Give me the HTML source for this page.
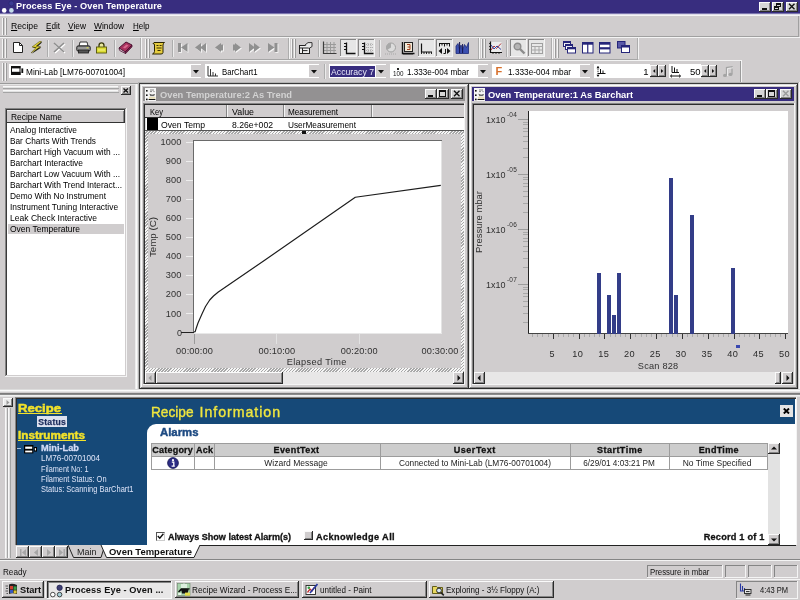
<!DOCTYPE html>
<html><head><meta charset="utf-8"><title>Process Eye - Oven Temperature</title>
<style>
html,body{margin:0;padding:0;}
body{width:800px;height:600px;overflow:hidden;background:#d0cdce;position:relative;font-family:"Liberation Sans",sans-serif;font-size:11px;}
#r{position:absolute;left:0;top:0;width:800px;height:600px;overflow:hidden;will-change:transform;}
#r div,#r svg,#r span{position:absolute;}
#r div{box-sizing:border-box;}
#r span{white-space:nowrap;line-height:1;}
svg text{font-family:"Liberation Sans",sans-serif;}
</style></head><body><div id="r">
<div style="left:0px;top:0px;width:800px;height:13px;background:#382d7f;"></div>
<div style="left:0px;top:13px;width:800px;height:1px;background:#7a74ae;"></div>
<div style="left:0px;top:14px;width:800px;height:1px;background:#dddbe8;"></div>
<svg style="left:1px;top:0px" width="14" height="14" viewBox="0 0 14 14" ><circle cx="10.4" cy="3.4" r="2.5" fill="#3c3c92" stroke="#26266e" stroke-width="0.6"/><circle cx="3.2" cy="10.4" r="2.3" fill="#ffffff"/><circle cx="10.4" cy="10.4" r="2.3" fill="#c4dcea"/></svg>
<span id="t0" style="top:2.2px;font-size:9.2px;color:#ffffff;font-weight:bold;letter-spacing:0.09px;left:16.0px;">Process Eye - Oven Temperature</span>
<div style="left:759px;top:2px;width:12px;height:10px;background:#d6d6d6;"></div>
<div style="left:759px;top:2px;width:11px;height:1px;background:#fafafa;"></div>
<div style="left:759px;top:2px;width:1px;height:9px;background:#fafafa;"></div>
<div style="left:759px;top:11px;width:12px;height:1px;background:#2a2a2a;"></div>
<div style="left:770px;top:2px;width:1px;height:10px;background:#2a2a2a;"></div>
<div style="left:760px;top:10px;width:10px;height:1px;background:#858585;"></div>
<div style="left:769px;top:3px;width:1px;height:8px;background:#858585;"></div>
<div style="left:762px;top:8px;width:5px;height:2px;background:#111;"></div>
<div style="left:772px;top:2px;width:12px;height:10px;background:#d6d6d6;"></div>
<div style="left:772px;top:2px;width:11px;height:1px;background:#fafafa;"></div>
<div style="left:772px;top:2px;width:1px;height:9px;background:#fafafa;"></div>
<div style="left:772px;top:11px;width:12px;height:1px;background:#2a2a2a;"></div>
<div style="left:783px;top:2px;width:1px;height:10px;background:#2a2a2a;"></div>
<div style="left:773px;top:10px;width:10px;height:1px;background:#858585;"></div>
<div style="left:782px;top:3px;width:1px;height:8px;background:#858585;"></div>
<div style="left:776px;top:3px;width:5px;height:4px;border:1px solid #111;border-top:2px solid #111;"></div>
<div style="left:774px;top:6px;width:5px;height:4px;background:#d6d6d6;border:1px solid #111;border-top:2px solid #111;"></div>
<div style="left:786px;top:2px;width:12px;height:10px;background:#d6d6d6;"></div>
<div style="left:786px;top:2px;width:11px;height:1px;background:#fafafa;"></div>
<div style="left:786px;top:2px;width:1px;height:9px;background:#fafafa;"></div>
<div style="left:786px;top:11px;width:12px;height:1px;background:#2a2a2a;"></div>
<div style="left:797px;top:2px;width:1px;height:10px;background:#2a2a2a;"></div>
<div style="left:787px;top:10px;width:10px;height:1px;background:#858585;"></div>
<div style="left:796px;top:3px;width:1px;height:8px;background:#858585;"></div>
<svg style="left:788px;top:3px" width="8" height="7" viewBox="0 0 8 7" ><path d="M1,0.8 L6.5,6.2 M6.5,0.8 L1,6.2" stroke="#111" stroke-width="1.35" fill="none"/></svg>
<div style="left:0px;top:15px;width:800px;height:1px;background:#f4f4f4;"></div>
<div style="left:0px;top:36px;width:799px;height:1px;background:#a0a0a0;"></div>
<div style="left:798px;top:16px;width:1px;height:21px;background:#a0a0a0;"></div>
<div style="left:2px;top:18px;width:1px;height:17px;background:#f4f4f4;"></div>
<div style="left:3px;top:18px;width:1px;height:17px;background:#9a9a9a;"></div>
<div style="left:5px;top:18px;width:1px;height:17px;background:#f4f4f4;"></div>
<div style="left:6px;top:18px;width:1px;height:17px;background:#9a9a9a;"></div>
<span id="t1" style="top:21.4px;font-size:9.5px;color:#000;left:11.0px;transform-origin:0 50%;transform:scaleX(0.912);"><u>R</u>ecipe</span>
<span id="t2" style="top:21.4px;font-size:9.5px;color:#000;left:46.0px;transform-origin:0 50%;transform:scaleX(0.854);"><u>E</u>dit</span>
<span id="t3" style="top:21.4px;font-size:9.5px;color:#000;left:68.0px;transform-origin:0 50%;transform:scaleX(0.881);"><u>V</u>iew</span>
<span id="t4" style="top:21.4px;font-size:9.5px;color:#000;left:94.0px;transform-origin:0 50%;transform:scaleX(0.888);"><u>W</u>indow</span>
<span id="t5" style="top:21.4px;font-size:9.5px;color:#000;left:132.5px;transform-origin:0 50%;transform:scaleX(0.843);"><u>H</u>elp</span>
<div style="left:0px;top:37px;width:800px;height:1px;background:#f4f4f4;"></div>
<div style="left:0px;top:59px;width:638px;height:1px;background:#a6a6a6;"></div>
<div style="left:0px;top:60px;width:742px;height:1px;background:#f4f4f4;"></div>
<div style="left:2px;top:39px;width:1px;height:19px;background:#f4f4f4;"></div>
<div style="left:3px;top:39px;width:1px;height:19px;background:#9a9a9a;"></div>
<div style="left:5px;top:39px;width:1px;height:19px;background:#f4f4f4;"></div>
<div style="left:6px;top:39px;width:1px;height:19px;background:#9a9a9a;"></div>
<svg style="left:13px;top:42px" width="10" height="11" viewBox="0 0 10 11" ><path d="M0.5,0.5 H6.5 L9.5,3.5 V10.5 H0.5 Z" fill="#fff" stroke="#222" stroke-width="1"/><path d="M6.5,0.5 V3.5 H9.5" fill="none" stroke="#222" stroke-width="1"/></svg>
<svg style="left:30px;top:41px" width="12" height="13" viewBox="0 0 12 13" ><path d="M10.3,1.3 L2.8,6.8 L7,7.2 L1.8,12.8 L11.3,6.4 L7,6 L12.3,1.3 Z" fill="#1a1a10"/><path d="M9.5,0.5 L2,6 L6.2,6.4 L1,12 L10.5,5.6 L6.2,5.2 L11.5,0.5 Z" fill="#eadc3a" stroke="#4a4200" stroke-width="0.5"/></svg>
<div style="left:47px;top:40px;width:1px;height:17px;background:#adadad;"></div>
<div style="left:48px;top:40px;width:1px;height:17px;background:#ececec;"></div>
<svg style="left:53px;top:42px" width="13" height="12" viewBox="0 0 13 12" ><path d="M2,2 L12,11 M12,2 L2,11" stroke="#fff" stroke-width="1.6"/><path d="M1,1 L11,10 M11,1 L1,10" stroke="#8e8e8e" stroke-width="1.6"/></svg>
<div style="left:72px;top:40px;width:1px;height:17px;background:#adadad;"></div>
<div style="left:73px;top:40px;width:1px;height:17px;background:#ececec;"></div>
<svg style="left:76px;top:41px" width="15" height="13" viewBox="0 0 15 13" ><path d="M4,1 H11 L12,5 H3 Z" fill="#fff" stroke="#222" stroke-width="0.9"/><rect x="0.8" y="5" width="13.4" height="5" rx="1.2" fill="#9a9a9a" stroke="#1c1c1c" stroke-width="1"/><rect x="2.5" y="9" width="10" height="3" fill="#555" stroke="#1c1c1c" stroke-width="0.8"/><rect x="10.5" y="6.3" width="2" height="1" fill="#e0e040"/></svg>
<svg style="left:95px;top:41px" width="13" height="13" viewBox="0 0 13 13" ><path d="M4,6.5 V4.4 Q4,1.8 6.5,1.8 Q9,1.8 9,4.4 V6.5" fill="#e8e8a0" stroke="#3c3c10" stroke-width="1.3"/><rect x="1.5" y="6" width="10" height="6" fill="#dcdc34" stroke="#55550c" stroke-width="0.9"/><rect x="3" y="8.5" width="7" height="1" fill="#f4f48a"/></svg>
<div style="left:114px;top:40px;width:1px;height:17px;background:#adadad;"></div>
<div style="left:115px;top:40px;width:1px;height:17px;background:#ececec;"></div>
<svg style="left:118px;top:41px" width="15" height="13" viewBox="0 0 15 13" ><path d="M1,7 L8,1 L14,4 L7,11 Z" fill="#a8325e" stroke="#4a1030" stroke-width="1"/><path d="M1,7 L1.6,9.4 L7.6,12.6 L7,11 Z" fill="#e8d8e0" stroke="#4a1030" stroke-width="0.8"/><path d="M7,11 L7.6,12.6 L14,5.8 L14,4 Z" fill="#7a2048" stroke="#4a1030" stroke-width="0.8"/><path d="M5,6.5 L8.5,3.6 L10.5,4.6 L7,7.6 Z" fill="#d86a8e"/></svg>
<div style="left:140px;top:38px;width:1px;height:21px;background:#adadad;"></div>
<div style="left:141px;top:38px;width:1px;height:21px;background:#f4f4f4;"></div>
<div style="left:145px;top:39px;width:1px;height:19px;background:#f4f4f4;"></div>
<div style="left:146px;top:39px;width:1px;height:19px;background:#9a9a9a;"></div>
<div style="left:148px;top:39px;width:1px;height:19px;background:#f4f4f4;"></div>
<div style="left:149px;top:39px;width:1px;height:19px;background:#9a9a9a;"></div>
<svg style="left:151px;top:41px" width="15" height="14" viewBox="0 0 15 14" ><path d="M3,1.5 H13.5 Q12,2.5 12,4 V11.5 Q12,13 10,13 H1.5 Q3.5,12 3.5,10.5 V4 Q3.5,2.5 2,2.5 Z" fill="#e6cc40" stroke="#2a2400" stroke-width="1"/><path d="M5.5,4.5 H7.5 M8.6,4.5 H10.6 M5.5,7 H10.6 M6.5,9.5 H9.6" stroke="#3a3000" stroke-width="1"/></svg>
<div style="left:172px;top:40px;width:1px;height:17px;background:#adadad;"></div>
<div style="left:173px;top:40px;width:1px;height:17px;background:#ececec;"></div>
<svg style="left:178px;top:43px" width="13" height="11" viewBox="0 0 13 11" ><g transform="translate(0.9,0.9)" fill="#f6f6f6"><rect x="0" y="0" width="3" height="9"/><polygon points="9.5,0 9.5,9 3,4.5"/></g><g transform="translate(0,0)" fill="#909090"><rect x="0" y="0" width="3" height="9"/><polygon points="9.5,0 9.5,9 3,4.5"/></g></svg>
<svg style="left:195px;top:43px" width="13" height="11" viewBox="0 0 13 11" ><g transform="translate(0.9,0.9)" fill="#f6f6f6"><polygon points="6,0 6,9 0,4.5"/><polygon points="11,0 11,9 5,4.5"/></g><g transform="translate(0,0)" fill="#909090"><polygon points="6,0 6,9 0,4.5"/><polygon points="11,0 11,9 5,4.5"/></g></svg>
<svg style="left:214.7px;top:43px" width="13" height="11" viewBox="0 0 13 11" ><g transform="translate(0.9,0.9)" fill="#f6f6f6"><polygon points="6,0 6,9 0,4.5"/><rect x="5.5" y="1.5" width="2.5" height="6"/></g><g transform="translate(0,0)" fill="#909090"><polygon points="6,0 6,9 0,4.5"/><rect x="5.5" y="1.5" width="2.5" height="6"/></g></svg>
<svg style="left:232.6px;top:43px" width="13" height="11" viewBox="0 0 13 11" ><g transform="translate(0.9,0.9)" fill="#f6f6f6"><polygon points="2,0 2,9 8,4.5"/><rect x="0" y="1.5" width="2.5" height="6"/></g><g transform="translate(0,0)" fill="#909090"><polygon points="2,0 2,9 8,4.5"/><rect x="0" y="1.5" width="2.5" height="6"/></g></svg>
<svg style="left:249px;top:43px" width="13" height="11" viewBox="0 0 13 11" ><g transform="translate(0.9,0.9)" fill="#f6f6f6"><polygon points="0,0 0,9 6,4.5"/><polygon points="5,0 5,9 11,4.5"/></g><g transform="translate(0,0)" fill="#909090"><polygon points="0,0 0,9 6,4.5"/><polygon points="5,0 5,9 11,4.5"/></g></svg>
<svg style="left:267.5px;top:43px" width="13" height="11" viewBox="0 0 13 11" ><g transform="translate(0.9,0.9)" fill="#f6f6f6"><polygon points="0,0 0,9 6.5,4.5"/><rect x="6.5" y="0" width="3" height="9"/></g><g transform="translate(0,0)" fill="#909090"><polygon points="0,0 0,9 6.5,4.5"/><rect x="6.5" y="0" width="3" height="9"/></g></svg>
<div style="left:288px;top:38px;width:1px;height:21px;background:#adadad;"></div>
<div style="left:289px;top:38px;width:1px;height:21px;background:#f4f4f4;"></div>
<div style="left:291px;top:39px;width:1px;height:19px;background:#f4f4f4;"></div>
<div style="left:292px;top:39px;width:1px;height:19px;background:#9a9a9a;"></div>
<div style="left:294px;top:39px;width:1px;height:19px;background:#f4f4f4;"></div>
<div style="left:295px;top:39px;width:1px;height:19px;background:#9a9a9a;"></div>
<svg style="left:299px;top:42px" width="14" height="12" viewBox="0 0 14 12" ><rect x="0.5" y="3.5" width="10" height="8" fill="#f0f0f0" stroke="#222" stroke-width="1"/><path d="M0.5,6 H10.5 M3.5,6 V11.5 M3.5,8.6 H8.5" stroke="#222" stroke-width="1"/><path d="M6,3 L9,0.6 H13 V4.6 L10.6,6" fill="#e8e8e8" stroke="#222" stroke-width="0.9"/></svg>
<div style="left:318px;top:40px;width:1px;height:17px;background:#adadad;"></div>
<div style="left:319px;top:40px;width:1px;height:17px;background:#ececec;"></div>
<svg style="left:322px;top:41px" width="15" height="14" viewBox="0 0 15 14" ><path d="M1.5,3.5 H14 M1.5,6.5 H14 M1.5,9.5 H14 M5,1 V12 M8.5,1 V12 M12,1 V12" stroke="#9a9a9a" stroke-width="1"/><path d="M1.5,0.5 V12.5 H14.5" fill="none" stroke="#3c3c3c" stroke-width="1.2"/></svg>
<div style="left:339.5px;top:39px;width:17px;height:18px;background:#e6e6e6;"></div>
<div style="left:339.5px;top:39px;width:17px;height:1px;background:#858585;"></div>
<div style="left:339.5px;top:39px;width:1px;height:18px;background:#858585;"></div>
<div style="left:339.5px;top:56px;width:17px;height:1px;background:#f4f4f4;"></div>
<div style="left:355.5px;top:39px;width:1px;height:18px;background:#f4f4f4;"></div>
<svg style="left:343px;top:42px" width="13" height="13" viewBox="0 0 13 13" ><path d="M3.5,0.5 V11.5 H12.5" fill="none" stroke="#111" stroke-width="1.3"/><path d="M1,1.5 H3.5 M1,4.5 H3.5 M1,7.5 H3.5" stroke="#111" stroke-width="1"/></svg>
<div style="left:357.5px;top:39px;width:17px;height:18px;background:#e6e6e6;"></div>
<div style="left:357.5px;top:39px;width:17px;height:1px;background:#858585;"></div>
<div style="left:357.5px;top:39px;width:1px;height:18px;background:#858585;"></div>
<div style="left:357.5px;top:56px;width:17px;height:1px;background:#f4f4f4;"></div>
<div style="left:373.5px;top:39px;width:1px;height:18px;background:#f4f4f4;"></div>
<svg style="left:361px;top:42px" width="13" height="13" viewBox="0 0 13 13" ><path d="M5,2.5 H12 M5,5.5 H12 M5,8.5 H12 M7,1 V11 M10,1 V11" stroke="#a8a8a8" stroke-width="0.9" stroke-dasharray="1,1"/><path d="M3.5,0.5 V11.5 H12.5" fill="none" stroke="#111" stroke-width="1.3"/><path d="M1,1.5 H3.5 M1,4.5 H3.5 M1,7.5 H3.5" stroke="#111" stroke-width="1"/></svg>
<div style="left:379px;top:40px;width:1px;height:17px;background:#adadad;"></div>
<div style="left:380px;top:40px;width:1px;height:17px;background:#ececec;"></div>
<svg style="left:384px;top:42px" width="14" height="13" viewBox="0 0 14 13" ><circle cx="7" cy="5.5" r="4.5" fill="#dcdcdc" stroke="#a0a0a0" stroke-width="1"/><path d="M7,5.5 V1 A4.5,4.5 0 0 0 3,8 Z" fill="#a8a8a8"/><path d="M1,12 H13" stroke="#a8a8a8" stroke-width="1" stroke-dasharray="1,1"/></svg>
<svg style="left:401px;top:42px" width="14" height="13" viewBox="0 0 14 13" ><rect x="3.5" y="0.5" width="8" height="9" fill="#f2ead8" stroke="#222" stroke-width="1"/><path d="M1.5,0 V11.5 H13.5" fill="none" stroke="#111" stroke-width="1.4"/><path d="M3,11.5 V13 M5,11.5 V13 M7,11.5 V13 M9,11.5 V13 M11,11.5 V13" stroke="#111" stroke-width="0.8"/><path d="M6,2.5 H9 V5 H6.6 M9,5 V7.5 H6" fill="none" stroke="#a04020" stroke-width="1"/></svg>
<div style="left:417.5px;top:39px;width:17px;height:18px;background:#e6e6e6;"></div>
<div style="left:417.5px;top:39px;width:17px;height:1px;background:#858585;"></div>
<div style="left:417.5px;top:39px;width:1px;height:18px;background:#858585;"></div>
<div style="left:417.5px;top:56px;width:17px;height:1px;background:#f4f4f4;"></div>
<div style="left:433.5px;top:39px;width:1px;height:18px;background:#f4f4f4;"></div>
<svg style="left:420px;top:43px" width="13" height="12" viewBox="0 0 13 12" ><path d="M1.5,0.5 V9 H12" fill="none" stroke="#111" stroke-width="1.2"/><path d="M4,9 V11 M6.5,9 V11 M9,9 V11 M11.5,9 V11 M1.5,9 V11" stroke="#111" stroke-width="0.9"/></svg>
<div style="left:435.5px;top:39px;width:17px;height:18px;background:#e6e6e6;"></div>
<div style="left:435.5px;top:39px;width:17px;height:1px;background:#858585;"></div>
<div style="left:435.5px;top:39px;width:1px;height:18px;background:#858585;"></div>
<div style="left:435.5px;top:56px;width:17px;height:1px;background:#f4f4f4;"></div>
<div style="left:451.5px;top:39px;width:1px;height:18px;background:#f4f4f4;"></div>
<svg style="left:438px;top:42px" width="13" height="13" viewBox="0 0 13 13" ><path d="M1,1.5 H12 M1.5,1.5 V4.5 M4,1.5 V3.5 M6.5,1.5 V4.5 M9,1.5 V3.5 M11.5,1.5 V4.5" stroke="#111" stroke-width="1"/><polygon points="0.5,9 4,6 4,12" fill="#111"/><polygon points="12.5,9 9,6 9,12" fill="#111"/><path d="M5.5,11.5 H7.5 V7" stroke="#111" stroke-width="1" fill="none"/></svg>
<svg style="left:455px;top:41px" width="15" height="14" viewBox="0 0 15 14" ><path d="M1,12.5 V5 L3,2.5 L4.5,8 L6,4 L7.5,9 L9.5,3.5 L11.5,6.5 L13.5,1.5 V12.5 Z" fill="#3b4fb0" stroke="#1e2a78" stroke-width="0.8"/><path d="M4.6,1 V12 M7.6,3 V12" stroke="#141450" stroke-width="1"/></svg>
<div style="left:478px;top:38px;width:1px;height:21px;background:#adadad;"></div>
<div style="left:479px;top:38px;width:1px;height:21px;background:#f4f4f4;"></div>
<div style="left:481px;top:39px;width:1px;height:19px;background:#f4f4f4;"></div>
<div style="left:482px;top:39px;width:1px;height:19px;background:#9a9a9a;"></div>
<div style="left:484px;top:39px;width:1px;height:19px;background:#f4f4f4;"></div>
<div style="left:485px;top:39px;width:1px;height:19px;background:#9a9a9a;"></div>
<svg style="left:488px;top:41px" width="15" height="14" viewBox="0 0 15 14" ><rect x="2.5" y="1" width="11" height="10" fill="#ececec"/><path d="M2.5,0.5 V11.5 H14" fill="none" stroke="#111" stroke-width="1.2"/><path d="M3,9 L6,5 L8.5,7.5 L13,2.5" fill="none" stroke="#b03030" stroke-width="1"/><path d="M3,4 L6,8 L9,5 L13,8.5" fill="none" stroke="#3040a0" stroke-width="1"/><path d="M1,2.5 H2.5 M1,5.5 H2.5 M1,8.5 H2.5 M5,11.5 V13 M8,11.5 V13 M11,11.5 V13" stroke="#111" stroke-width="0.8"/></svg>
<div style="left:506px;top:40px;width:1px;height:17px;background:#adadad;"></div>
<div style="left:507px;top:40px;width:1px;height:17px;background:#ececec;"></div>
<div style="left:510px;top:39px;width:17px;height:18px;background:#e6e6e6;"></div>
<div style="left:510px;top:39px;width:17px;height:1px;background:#858585;"></div>
<div style="left:510px;top:39px;width:1px;height:18px;background:#858585;"></div>
<div style="left:510px;top:56px;width:17px;height:1px;background:#f4f4f4;"></div>
<div style="left:526px;top:39px;width:1px;height:18px;background:#f4f4f4;"></div>
<svg style="left:513px;top:42px" width="13" height="13" viewBox="0 0 13 13" ><circle cx="4.5" cy="4.5" r="3.3" fill="#b4b4b4" stroke="#8c8c8c" stroke-width="1.4"/><path d="M7,7 L11.5,11.5" stroke="#8c8c8c" stroke-width="2.4"/></svg>
<div style="left:528px;top:39px;width:17px;height:18px;background:#e6e6e6;"></div>
<div style="left:528px;top:39px;width:17px;height:1px;background:#858585;"></div>
<div style="left:528px;top:39px;width:1px;height:18px;background:#858585;"></div>
<div style="left:528px;top:56px;width:17px;height:1px;background:#f4f4f4;"></div>
<div style="left:544px;top:39px;width:1px;height:18px;background:#f4f4f4;"></div>
<svg style="left:531px;top:42px" width="13" height="13" viewBox="0 0 13 13" ><rect x="0.5" y="1.5" width="11" height="10" fill="#e8e8e8" stroke="#a0a0a0" stroke-width="1"/><path d="M0.5,4.5 H11.5 M0.5,8 H11.5 M4,4.5 V11.5 M8,4.5 V11.5" stroke="#a8a8a8" stroke-width="1"/></svg>
<div style="left:551px;top:38px;width:1px;height:21px;background:#adadad;"></div>
<div style="left:552px;top:38px;width:1px;height:21px;background:#f4f4f4;"></div>
<div style="left:554px;top:39px;width:1px;height:19px;background:#f4f4f4;"></div>
<div style="left:555px;top:39px;width:1px;height:19px;background:#9a9a9a;"></div>
<div style="left:557px;top:39px;width:1px;height:19px;background:#f4f4f4;"></div>
<div style="left:558px;top:39px;width:1px;height:19px;background:#9a9a9a;"></div>
<svg style="left:563px;top:41px" width="13" height="13" viewBox="0 0 13 13" ><rect x="0.5" y="0.5" width="7" height="5" fill="#fff" stroke="#26267a"/><rect x="0.5" y="0.5" width="7" height="1.6" fill="#26267a"/><rect x="2.5" y="3.5" width="7" height="5" fill="#fff" stroke="#26267a"/><rect x="2.5" y="3.5" width="7" height="1.6" fill="#26267a"/><rect x="4.5" y="6.5" width="8" height="5.5" fill="#fff" stroke="#26267a"/><rect x="4.5" y="6.5" width="8" height="1.8" fill="#26267a"/></svg>
<svg style="left:582px;top:42px" width="12" height="12" viewBox="0 0 12 12" ><rect x="0.5" y="0.5" width="10.5" height="10.5" fill="#fff" stroke="#26267a"/><rect x="0.5" y="0.5" width="10.5" height="2.2" fill="#26267a"/><path d="M5.75,1 V11" stroke="#26267a" stroke-width="1.2"/></svg>
<svg style="left:599px;top:42px" width="12" height="12" viewBox="0 0 12 12" ><rect x="0.5" y="0.5" width="10.5" height="10.5" fill="#fff" stroke="#26267a"/><rect x="0.5" y="0.5" width="10.5" height="2.2" fill="#26267a"/><rect x="0.5" y="5.2" width="10.5" height="2.2" fill="#26267a"/></svg>
<svg style="left:617px;top:41px" width="13" height="13" viewBox="0 0 13 13" ><rect x="0.5" y="0.5" width="7.5" height="6.5" fill="#5a5aa8" stroke="#26267a"/><rect x="4.5" y="4.5" width="8" height="7" fill="#fff" stroke="#26267a"/><rect x="4.5" y="4.5" width="8" height="2" fill="#26267a"/></svg>
<div style="left:637px;top:38px;width:1px;height:21px;background:#adadad;"></div>
<div style="left:638px;top:38px;width:1px;height:21px;background:#f4f4f4;"></div>
<div style="left:0px;top:83px;width:741px;height:1px;background:#9a9a9a;"></div>
<div style="left:740px;top:61px;width:1px;height:23px;background:#9a9a9a;"></div>
<div style="left:741px;top:61px;width:1px;height:23px;background:#f4f4f4;"></div>
<div style="left:2px;top:63px;width:1px;height:18px;background:#f4f4f4;"></div>
<div style="left:3px;top:63px;width:1px;height:18px;background:#9a9a9a;"></div>
<div style="left:5px;top:63px;width:1px;height:18px;background:#f4f4f4;"></div>
<div style="left:6px;top:63px;width:1px;height:18px;background:#9a9a9a;"></div>
<div style="left:9px;top:64px;width:192px;height:14px;background:#fff;"></div>
<div style="left:191px;top:65px;width:10px;height:12px;background:#d0cdce;"></div>
<svg style="left:193.0px;top:69.5px" width="6" height="4" viewBox="0 0 6 4" ><polygon points="0,0 6,0 3,3.4" fill="#111"/></svg>
<svg style="left:11px;top:66px" width="13" height="10" viewBox="0 0 13 10" ><rect x="0.5" y="0.5" width="8.5" height="8" fill="#fff" stroke="#111" stroke-width="1"/><rect x="0" y="0" width="9.5" height="2.4" fill="#111"/><rect x="0" y="5.8" width="9.5" height="3.2" fill="#111"/><rect x="10.4" y="2.4" width="1.8" height="4.6" fill="#111"/></svg>
<span id="t6" style="top:66.9px;font-size:9.5px;color:#000;left:26.0px;transform-origin:0 50%;transform:scaleX(0.872);">Mini-Lab [LM76-00701004]</span>
<div style="left:205px;top:64px;width:114px;height:14px;background:#fff;"></div>
<div style="left:309px;top:65px;width:10px;height:12px;background:#d0cdce;"></div>
<svg style="left:311.0px;top:69.5px" width="6" height="4" viewBox="0 0 6 4" ><polygon points="0,0 6,0 3,3.4" fill="#111"/></svg>
<svg style="left:207px;top:66px" width="12" height="11" viewBox="0 0 12 11" ><path d="M1,0 V10 H11" fill="none" stroke="#333" stroke-width="1"/><path d="M3.5,10 V3 M6,10 V6 M8.5,10 V7.5" stroke="#333" stroke-width="1"/></svg>
<span id="t7" style="top:66.9px;font-size:9.5px;color:#000;left:221.5px;transform-origin:0 50%;transform:scaleX(0.820);">BarChart1</span>
<div style="left:324px;top:64px;width:1px;height:15px;background:#adadad;"></div>
<div style="left:325px;top:64px;width:1px;height:15px;background:#ececec;"></div>
<div style="left:329px;top:64px;width:57px;height:14px;background:#fff;"></div>
<div style="left:376px;top:65px;width:10px;height:12px;background:#d0cdce;"></div>
<svg style="left:378.0px;top:69.5px" width="6" height="4" viewBox="0 0 6 4" ><polygon points="0,0 6,0 3,3.4" fill="#111"/></svg>
<div style="left:330px;top:66px;width:45px;height:11px;background:#382d7f;"></div>
<span id="t8" style="top:66.9px;font-size:9.5px;color:#e8e8f8;left:331.0px;transform-origin:0 50%;transform:scaleX(0.915);">Accuracy 7</span>
<div style="left:390px;top:64px;width:98px;height:14px;background:#fff;"></div>
<div style="left:478px;top:65px;width:10px;height:12px;background:#d0cdce;"></div>
<svg style="left:480.0px;top:69.5px" width="6" height="4" viewBox="0 0 6 4" ><polygon points="0,0 6,0 3,3.4" fill="#111"/></svg>
<span id="t9" style="top:69.9px;font-size:7px;color:#111;left:392.8px;transform-origin:0 50%;transform:scaleX(0.898);">100</span>
<div style="left:397px;top:68px;width:2px;height:1.5px;background:#222;"></div>
<span id="t10" style="top:66.9px;font-size:9.5px;color:#000;left:407.0px;transform-origin:0 50%;transform:scaleX(0.857);">1.333e-004 mbar</span>
<div style="left:492px;top:64px;width:98px;height:14px;background:#fff;"></div>
<div style="left:580px;top:65px;width:10px;height:12px;background:#d0cdce;"></div>
<svg style="left:582.0px;top:69.5px" width="6" height="4" viewBox="0 0 6 4" ><polygon points="0,0 6,0 3,3.4" fill="#111"/></svg>
<span id="t11" style="top:66.2px;font-size:11px;color:#d8702c;font-weight:bold;letter-spacing:0.27px;left:495.5px;">F</span>
<span id="t12" style="top:66.9px;font-size:9.5px;color:#000;left:508.0px;transform-origin:0 50%;transform:scaleX(0.871);">1.333e-004 mbar</span>
<div style="left:594px;top:64px;width:56px;height:14px;background:#fff;"></div>
<div style="left:650px;top:65px;width:8px;height:12px;background:#d0cdce;"></div>
<div style="left:650px;top:65px;width:7px;height:1px;background:#fafafa;"></div>
<div style="left:650px;top:65px;width:1px;height:11px;background:#fafafa;"></div>
<div style="left:650px;top:76px;width:8px;height:1px;background:#2a2a2a;"></div>
<div style="left:657px;top:65px;width:1px;height:12px;background:#2a2a2a;"></div>
<div style="left:651px;top:75px;width:6px;height:1px;background:#858585;"></div>
<div style="left:656px;top:66px;width:1px;height:10px;background:#858585;"></div>
<svg style="left:652.7px;top:69px" width="3" height="4" viewBox="0 0 3 4" ><polygon points="2.2,0 2.2,4 0,2" fill="#111"/></svg>
<div style="left:658px;top:65px;width:8px;height:12px;background:#d0cdce;"></div>
<div style="left:658px;top:65px;width:7px;height:1px;background:#fafafa;"></div>
<div style="left:658px;top:65px;width:1px;height:11px;background:#fafafa;"></div>
<div style="left:658px;top:76px;width:8px;height:1px;background:#2a2a2a;"></div>
<div style="left:665px;top:65px;width:1px;height:12px;background:#2a2a2a;"></div>
<div style="left:659px;top:75px;width:6px;height:1px;background:#858585;"></div>
<div style="left:664px;top:66px;width:1px;height:10px;background:#858585;"></div>
<svg style="left:660.7px;top:69px" width="3" height="4" viewBox="0 0 3 4" ><polygon points="0,0 0,4 2.2,2" fill="#111"/></svg>
<span id="t13" style="top:66.9px;font-size:9.5px;color:#000;left:648.5px;transform-origin:100% 50%;transform:translateX(-100%);">1</span>
<svg style="left:596px;top:66px" width="11" height="11" viewBox="0 0 11 11" ><path d="M2,0.5 V10.5" fill="none" stroke="#111" stroke-width="1" stroke-dasharray="1.2,0.9"/><polygon points="0.5,2.2 2,0 3.5,2.2" fill="#111"/><polygon points="0.5,8.8 2,11 3.5,8.8" fill="#111"/><path d="M2,7.5 H9.5 M4.5,7.5 V3 M7,7.5 V4.5" stroke="#111" stroke-width="1" fill="none"/></svg>
<div style="left:669px;top:64px;width:32px;height:14px;background:#fff;"></div>
<div style="left:701px;top:65px;width:8px;height:12px;background:#d0cdce;"></div>
<div style="left:701px;top:65px;width:7px;height:1px;background:#fafafa;"></div>
<div style="left:701px;top:65px;width:1px;height:11px;background:#fafafa;"></div>
<div style="left:701px;top:76px;width:8px;height:1px;background:#2a2a2a;"></div>
<div style="left:708px;top:65px;width:1px;height:12px;background:#2a2a2a;"></div>
<div style="left:702px;top:75px;width:6px;height:1px;background:#858585;"></div>
<div style="left:707px;top:66px;width:1px;height:10px;background:#858585;"></div>
<svg style="left:703.7px;top:69px" width="3" height="4" viewBox="0 0 3 4" ><polygon points="2.2,0 2.2,4 0,2" fill="#111"/></svg>
<div style="left:709px;top:65px;width:8px;height:12px;background:#d0cdce;"></div>
<div style="left:709px;top:65px;width:7px;height:1px;background:#fafafa;"></div>
<div style="left:709px;top:65px;width:1px;height:11px;background:#fafafa;"></div>
<div style="left:709px;top:76px;width:8px;height:1px;background:#2a2a2a;"></div>
<div style="left:716px;top:65px;width:1px;height:12px;background:#2a2a2a;"></div>
<div style="left:710px;top:75px;width:6px;height:1px;background:#858585;"></div>
<div style="left:715px;top:66px;width:1px;height:10px;background:#858585;"></div>
<svg style="left:711.7px;top:69px" width="3" height="4" viewBox="0 0 3 4" ><polygon points="0,0 0,4 2.2,2" fill="#111"/></svg>
<span id="t14" style="top:66.9px;font-size:9.5px;color:#000;left:700.5px;transform-origin:100% 50%;transform:translateX(-100%);">50</span>
<svg style="left:670px;top:66px" width="11" height="12" viewBox="0 0 11 12" ><path d="M2,0 V6.5 H9 M4.5,6.5 V1.5 M7,6.5 V3" fill="none" stroke="#111" stroke-width="1"/><path d="M0.5,10 H10.5 M2,8.6 L0.5,10 L2,11.4 M9,8.6 L10.5,10 L9,11.4" fill="none" stroke="#111" stroke-width="1"/></svg>
<svg style="left:722px;top:66px" width="12" height="12" viewBox="0 0 12 12" ><path d="M4.5,9 V1.5 L10,0.8 V8" fill="none" stroke="#a4a4a4" stroke-width="1.3"/><ellipse cx="3" cy="9.4" rx="2" ry="1.6" fill="#a4a4a4"/><ellipse cx="8.5" cy="8.4" rx="2" ry="1.6" fill="#a4a4a4"/><path d="M5.5,10 V2.5 L11,1.8" fill="none" stroke="#f4f4f4" stroke-width="0.8"/></svg>
<div style="left:135px;top:84px;width:1px;height:305px;background:#ececec;"></div>
<div style="left:136px;top:84px;width:1px;height:305px;background:#fafafa;"></div>
<div style="left:137px;top:84px;width:1px;height:305px;background:#e2e2e2;"></div>
<div style="left:0px;top:84px;width:135px;height:1px;background:#e4e4e4;"></div>
<div style="left:3px;top:86px;width:115px;height:1px;background:#f8f8f8;"></div>
<div style="left:3px;top:87px;width:115px;height:1px;background:#e2e2e2;"></div>
<div style="left:3px;top:88px;width:116px;height:1px;background:#a4a4a4;"></div>
<div style="left:3px;top:90px;width:115px;height:1px;background:#f8f8f8;"></div>
<div style="left:3px;top:91px;width:115px;height:1px;background:#e2e2e2;"></div>
<div style="left:3px;top:92px;width:116px;height:1px;background:#a4a4a4;"></div>
<div style="left:121px;top:86px;width:10px;height:9px;background:#d0cdce;"></div>
<div style="left:121px;top:86px;width:9px;height:1px;background:#fafafa;"></div>
<div style="left:121px;top:86px;width:1px;height:8px;background:#fafafa;"></div>
<div style="left:121px;top:94px;width:10px;height:1px;background:#2a2a2a;"></div>
<div style="left:130px;top:86px;width:1px;height:9px;background:#2a2a2a;"></div>
<div style="left:122px;top:93px;width:8px;height:1px;background:#858585;"></div>
<div style="left:129px;top:87px;width:1px;height:7px;background:#858585;"></div>
<svg style="left:123px;top:88px" width="6" height="5" viewBox="0 0 6 5" ><path d="M0.5,0.5 L5,4.5 M5,0.5 L0.5,4.5" stroke="#111" stroke-width="1.4"/></svg>
<div style="left:5px;top:108px;width:122px;height:269px;background:#fff;"></div>
<div style="left:5px;top:108px;width:122px;height:1px;background:#858585;"></div>
<div style="left:5px;top:108px;width:1px;height:269px;background:#858585;"></div>
<div style="left:5px;top:376px;width:122px;height:1px;background:#f4f4f4;"></div>
<div style="left:126px;top:108px;width:1px;height:269px;background:#f4f4f4;"></div>
<div style="left:6px;top:109px;width:120px;height:1px;background:#3a3a3a;"></div>
<div style="left:6px;top:109px;width:1px;height:267px;background:#3a3a3a;"></div>
<div style="left:6px;top:375px;width:120px;height:1px;background:#d0cdce;"></div>
<div style="left:125px;top:109px;width:1px;height:267px;background:#d0cdce;"></div>
<div style="left:7px;top:110px;width:118px;height:13px;background:#d0cdce;"></div>
<div style="left:7px;top:122px;width:118px;height:1px;background:#333;"></div>
<div style="left:124px;top:110px;width:1px;height:13px;background:#333;"></div>
<div style="left:123px;top:111px;width:1px;height:11px;background:#858585;"></div>
<div style="left:7px;top:110px;width:117px;height:1px;background:#f4f4f4;"></div>
<span id="t15" style="top:111.9px;font-size:9.5px;color:#000;left:11.0px;transform-origin:0 50%;transform:scaleX(0.886);">Recipe Name</span>
<span id="t16" style="top:125.4px;font-size:9.5px;color:#000;left:10.0px;transform-origin:0 50%;transform:scaleX(0.881);">Analog Interactive</span>
<span id="t17" style="top:136.4px;font-size:9.5px;color:#000;left:10.0px;transform-origin:0 50%;transform:scaleX(0.871);">Bar Charts With Trends</span>
<span id="t18" style="top:147.4px;font-size:9.5px;color:#000;left:10.0px;transform-origin:0 50%;transform:scaleX(0.880);">Barchart High Vacuum with ...</span>
<span id="t19" style="top:158.4px;font-size:9.5px;color:#000;left:10.0px;transform-origin:0 50%;transform:scaleX(0.886);">Barchart Interactive</span>
<span id="t20" style="top:169.4px;font-size:9.5px;color:#000;left:10.0px;transform-origin:0 50%;transform:scaleX(0.880);">Barchart Low Vacuum With ...</span>
<span id="t21" style="top:180.4px;font-size:9.5px;color:#000;left:10.0px;transform-origin:0 50%;transform:scaleX(0.884);">Barchart With Trend Interact...</span>
<span id="t22" style="top:191.4px;font-size:9.5px;color:#000;left:10.0px;transform-origin:0 50%;transform:scaleX(0.878);">Demo With No Instrument</span>
<span id="t23" style="top:202.4px;font-size:9.5px;color:#000;left:10.0px;transform-origin:0 50%;transform:scaleX(0.882);">Instrument Tuning Interactive</span>
<span id="t24" style="top:213.4px;font-size:9.5px;color:#000;left:10.0px;transform-origin:0 50%;transform:scaleX(0.900);">Leak Check Interactive</span>
<div style="left:8px;top:224px;width:116px;height:10px;background:#d0cdce;"></div>
<span id="t25" style="top:224.4px;font-size:9.5px;color:#000;left:10.0px;transform-origin:0 50%;transform:scaleX(0.892);">Oven Temperature</span>
<div style="left:138px;top:82px;width:662px;height:1px;background:#b4b4b4;"></div>
<div style="left:139px;top:83px;width:661px;height:1px;background:#3a3a3a;"></div>
<div style="left:138px;top:82px;width:1px;height:308px;background:#b4b4b4;"></div>
<div style="left:139px;top:83px;width:1px;height:306px;background:#3a3a3a;"></div>
<div style="left:138px;top:389px;width:662px;height:1px;background:#f4f4f4;"></div>
<div style="left:798px;top:83px;width:1px;height:306px;background:#d0cdce;"></div>
<div style="left:799px;top:82px;width:1px;height:308px;background:#f4f4f4;"></div>
<div style="left:140px;top:84px;width:329px;height:305px;background:#d0cdce;"></div>
<div style="left:140px;top:84px;width:329px;height:1px;background:#dedede;"></div>
<div style="left:140px;top:84px;width:1px;height:305px;background:#dedede;"></div>
<div style="left:140px;top:388px;width:329px;height:1px;background:#2a2a2a;"></div>
<div style="left:468px;top:84px;width:1px;height:305px;background:#2a2a2a;"></div>
<div style="left:141px;top:85px;width:327px;height:1px;background:#fbfbfb;"></div>
<div style="left:141px;top:85px;width:1px;height:303px;background:#fbfbfb;"></div>
<div style="left:141px;top:387px;width:327px;height:1px;background:#858585;"></div>
<div style="left:467px;top:85px;width:1px;height:303px;background:#858585;"></div>
<div style="left:143px;top:87px;width:322px;height:14px;background:#939192;"></div>
<svg style="left:145px;top:88px" width="11" height="13" viewBox="0 0 11 13" ><rect x="0" y="0" width="11" height="13" fill="#f6f6f6"/><rect x="1" y="2" width="1.6" height="1.6" fill="#111"/><rect x="1" y="6.4" width="1.6" height="1.6" fill="#111"/><rect x="1" y="10.6" width="1.6" height="1.6" fill="#111"/><path d="M5,2 H9 M5,3.6 H7 M8.4,3.6 H9.6" stroke="#777" stroke-width="0.9" fill="none"/><path d="M4.5,6.2 Q7,8 9.8,6.4 M5,7.6 H9.4" stroke="#555" stroke-width="0.9" fill="none"/><path d="M4,9.8 H10.4" stroke="#e8dfb8" stroke-width="2"/><path d="M3.6,11.5 H10.4" stroke="#111" stroke-width="1"/></svg>
<span id="t26" style="top:89.7px;font-size:9.5px;color:#d2d2d2;font-weight:bold;left:159.5px;transform-origin:0 50%;transform:scaleX(0.981);">Oven Temperature:2 As Trend</span>
<div style="left:451px;top:89px;width:12px;height:10px;background:#d6d6d6;"></div>
<div style="left:451px;top:89px;width:11px;height:1px;background:#fafafa;"></div>
<div style="left:451px;top:89px;width:1px;height:9px;background:#fafafa;"></div>
<div style="left:451px;top:98px;width:12px;height:1px;background:#2a2a2a;"></div>
<div style="left:462px;top:89px;width:1px;height:10px;background:#2a2a2a;"></div>
<div style="left:452px;top:97px;width:10px;height:1px;background:#858585;"></div>
<div style="left:461px;top:90px;width:1px;height:8px;background:#858585;"></div>
<svg style="left:453px;top:90px" width="8" height="7" viewBox="0 0 8 7" ><path d="M1,0.8 L6.5,6.2 M6.5,0.8 L1,6.2" stroke="#111" stroke-width="1.35" fill="none"/></svg>
<div style="left:437px;top:89px;width:12px;height:10px;background:#d6d6d6;"></div>
<div style="left:437px;top:89px;width:11px;height:1px;background:#fafafa;"></div>
<div style="left:437px;top:89px;width:1px;height:9px;background:#fafafa;"></div>
<div style="left:437px;top:98px;width:12px;height:1px;background:#2a2a2a;"></div>
<div style="left:448px;top:89px;width:1px;height:10px;background:#2a2a2a;"></div>
<div style="left:438px;top:97px;width:10px;height:1px;background:#858585;"></div>
<div style="left:447px;top:90px;width:1px;height:8px;background:#858585;"></div>
<div style="left:439px;top:90px;width:7px;height:7px;border:1px solid #111;border-top:2px solid #111;"></div>
<div style="left:425px;top:89px;width:12px;height:10px;background:#d6d6d6;"></div>
<div style="left:425px;top:89px;width:11px;height:1px;background:#fafafa;"></div>
<div style="left:425px;top:89px;width:1px;height:9px;background:#fafafa;"></div>
<div style="left:425px;top:98px;width:12px;height:1px;background:#2a2a2a;"></div>
<div style="left:436px;top:89px;width:1px;height:10px;background:#2a2a2a;"></div>
<div style="left:426px;top:97px;width:10px;height:1px;background:#858585;"></div>
<div style="left:435px;top:90px;width:1px;height:8px;background:#858585;"></div>
<div style="left:428px;top:95px;width:5px;height:2px;background:#111;"></div>
<div style="left:469px;top:84px;width:329px;height:305px;background:#d0cdce;"></div>
<div style="left:469px;top:84px;width:329px;height:1px;background:#dedede;"></div>
<div style="left:469px;top:84px;width:1px;height:305px;background:#dedede;"></div>
<div style="left:469px;top:388px;width:329px;height:1px;background:#2a2a2a;"></div>
<div style="left:797px;top:84px;width:1px;height:305px;background:#2a2a2a;"></div>
<div style="left:470px;top:85px;width:327px;height:1px;background:#fbfbfb;"></div>
<div style="left:470px;top:85px;width:1px;height:303px;background:#fbfbfb;"></div>
<div style="left:470px;top:387px;width:327px;height:1px;background:#858585;"></div>
<div style="left:796px;top:85px;width:1px;height:303px;background:#858585;"></div>
<div style="left:472px;top:87px;width:322px;height:14px;background:#382d7f;"></div>
<svg style="left:474px;top:88px" width="11" height="13" viewBox="0 0 11 13" ><rect x="0" y="0" width="11" height="13" fill="#f6f6f6"/><rect x="1" y="2" width="1.6" height="1.6" fill="#111"/><rect x="1" y="6.4" width="1.6" height="1.6" fill="#111"/><rect x="1" y="10.6" width="1.6" height="1.6" fill="#111"/><path d="M5,2 H9 M5,3.6 H7 M8.4,3.6 H9.6" stroke="#777" stroke-width="0.9" fill="none"/><path d="M4.5,6.2 Q7,8 9.8,6.4 M5,7.6 H9.4" stroke="#555" stroke-width="0.9" fill="none"/><path d="M4,9.8 H10.4" stroke="#e8dfb8" stroke-width="2"/><path d="M3.6,11.5 H10.4" stroke="#111" stroke-width="1"/></svg>
<span id="t27" style="top:89.7px;font-size:9.5px;color:#ffffff;font-weight:bold;left:487.5px;transform-origin:0 50%;transform:scaleX(0.981);">Oven Temperature:1 As Barchart</span>
<div style="left:780px;top:89px;width:12px;height:10px;background:#d6d6d6;"></div>
<div style="left:780px;top:89px;width:11px;height:1px;background:#fafafa;"></div>
<div style="left:780px;top:89px;width:1px;height:9px;background:#fafafa;"></div>
<div style="left:780px;top:98px;width:12px;height:1px;background:#2a2a2a;"></div>
<div style="left:791px;top:89px;width:1px;height:10px;background:#2a2a2a;"></div>
<div style="left:781px;top:97px;width:10px;height:1px;background:#858585;"></div>
<div style="left:790px;top:90px;width:1px;height:8px;background:#858585;"></div>
<svg style="left:782px;top:90px" width="8" height="7" viewBox="0 0 8 7" ><path d="M1,0.8 L6.5,6.2 M6.5,0.8 L1,6.2" stroke="#9a9a9a" stroke-width="1.35" fill="none"/></svg>
<div style="left:766px;top:89px;width:12px;height:10px;background:#d6d6d6;"></div>
<div style="left:766px;top:89px;width:11px;height:1px;background:#fafafa;"></div>
<div style="left:766px;top:89px;width:1px;height:9px;background:#fafafa;"></div>
<div style="left:766px;top:98px;width:12px;height:1px;background:#2a2a2a;"></div>
<div style="left:777px;top:89px;width:1px;height:10px;background:#2a2a2a;"></div>
<div style="left:767px;top:97px;width:10px;height:1px;background:#858585;"></div>
<div style="left:776px;top:90px;width:1px;height:8px;background:#858585;"></div>
<div style="left:768px;top:90px;width:7px;height:7px;border:1px solid #111;border-top:2px solid #111;"></div>
<div style="left:754px;top:89px;width:12px;height:10px;background:#d6d6d6;"></div>
<div style="left:754px;top:89px;width:11px;height:1px;background:#fafafa;"></div>
<div style="left:754px;top:89px;width:1px;height:9px;background:#fafafa;"></div>
<div style="left:754px;top:98px;width:12px;height:1px;background:#2a2a2a;"></div>
<div style="left:765px;top:89px;width:1px;height:10px;background:#2a2a2a;"></div>
<div style="left:755px;top:97px;width:10px;height:1px;background:#858585;"></div>
<div style="left:764px;top:90px;width:1px;height:8px;background:#858585;"></div>
<div style="left:757px;top:95px;width:5px;height:2px;background:#111;"></div>
<div style="left:143px;top:103px;width:322px;height:1px;background:#858585;"></div>
<div style="left:143px;top:103px;width:1px;height:282px;background:#858585;"></div>
<div style="left:144px;top:104px;width:320px;height:1px;background:#2c2c2c;"></div>
<div style="left:144px;top:104px;width:1px;height:280px;background:#2c2c2c;"></div>
<div style="left:143px;top:384px;width:322px;height:1px;background:#f4f4f4;"></div>
<div style="left:464px;top:103px;width:1px;height:282px;background:#f4f4f4;"></div>
<div style="left:145px;top:105px;width:319px;height:12px;background:#d0cdce;"></div>
<div style="left:145px;top:117px;width:319px;height:1px;background:#2c2c2c;"></div>
<div style="left:226px;top:105px;width:1px;height:12px;background:#858585;"></div>
<div style="left:227px;top:105px;width:1px;height:12px;background:#f4f4f4;"></div>
<div style="left:283px;top:105px;width:1px;height:12px;background:#858585;"></div>
<div style="left:284px;top:105px;width:1px;height:12px;background:#f4f4f4;"></div>
<div style="left:371px;top:105px;width:1px;height:12px;background:#858585;"></div>
<div style="left:372px;top:105px;width:1px;height:12px;background:#f4f4f4;"></div>
<span id="t28" style="top:106.9px;font-size:9.5px;color:#000;left:150.0px;transform-origin:0 50%;transform:scaleX(0.794);">Key</span>
<span id="t29" style="top:106.9px;font-size:9.5px;color:#000;left:232.0px;transform-origin:0 50%;transform:scaleX(0.932);">Value</span>
<span id="t30" style="top:106.9px;font-size:9.5px;color:#000;left:287.5px;transform-origin:0 50%;transform:scaleX(0.861);">Measurement</span>
<div style="left:145px;top:118px;width:319px;height:13px;background:#fff;"></div>
<div style="left:147px;top:118px;width:11px;height:13px;background:#000;"></div>
<div style="left:145px;top:118px;width:1px;height:13px;background:#e0e0e0;"></div>
<span id="t31" style="top:119.9px;font-size:9.5px;color:#000;left:161.0px;transform-origin:0 50%;transform:scaleX(0.909);">Oven Temp</span>
<span id="t32" style="top:119.9px;font-size:9.5px;color:#000;left:231.5px;transform-origin:0 50%;transform:scaleX(0.908);">8.26e+002</span>
<span id="t33" style="top:119.9px;font-size:9.5px;color:#000;left:287.5px;transform-origin:0 50%;transform:scaleX(0.870);">UserMeasurement</span>
<div style="left:145px;top:130px;width:319px;height:1px;background:#555;"></div>
<div style="left:302px;top:131px;width:4px;height:3px;background:#111;"></div>
<div style="left:145px;top:131px;width:319px;height:241px;background:repeating-linear-gradient(135deg,#f6f6f6 0,#f6f6f6 1.1px,#a8a8a8 1.1px,#a8a8a8 2.2px);"></div>
<div style="left:148px;top:134px;width:313px;height:234px;background:#d0cdce;"></div>
<div style="left:302px;top:131px;width:4px;height:3px;background:#111;"></div>
<div style="left:194px;top:141px;width:247px;height:192px;background:#fff;"></div>
<div style="left:193px;top:140px;width:1px;height:193px;background:#6a6a6a;"></div>
<div style="left:193px;top:140px;width:249px;height:1px;background:#6a6a6a;"></div>
<div style="left:441px;top:141px;width:1px;height:192px;background:#e4e4e4;"></div>
<div style="left:194px;top:333px;width:248px;height:1px;background:#e8e8e8;"></div>
<span id="t34" style="top:137.8px;font-size:9.2px;color:#303030;letter-spacing:0.14px;left:181.6px;transform-origin:100% 50%;transform:translateX(-100%);">1000</span>
<div style="left:186px;top:142px;width:7px;height:1px;background:#eeeeee;"></div>
<span id="t35" style="top:156.8px;font-size:9.2px;color:#303030;letter-spacing:0.22px;left:181.7px;transform-origin:100% 50%;transform:translateX(-100%);">900</span>
<div style="left:186px;top:161px;width:7px;height:1px;background:#eeeeee;"></div>
<span id="t36" style="top:175.9px;font-size:9.2px;color:#303030;letter-spacing:0.22px;left:181.7px;transform-origin:100% 50%;transform:translateX(-100%);">800</span>
<div style="left:186px;top:180px;width:7px;height:1px;background:#eeeeee;"></div>
<span id="t37" style="top:195.0px;font-size:9.2px;color:#303030;letter-spacing:0.22px;left:181.7px;transform-origin:100% 50%;transform:translateX(-100%);">700</span>
<div style="left:186px;top:199px;width:7px;height:1px;background:#eeeeee;"></div>
<span id="t38" style="top:214.1px;font-size:9.2px;color:#303030;letter-spacing:0.22px;left:181.7px;transform-origin:100% 50%;transform:translateX(-100%);">600</span>
<div style="left:186px;top:218px;width:7px;height:1px;background:#eeeeee;"></div>
<span id="t39" style="top:233.2px;font-size:9.2px;color:#303030;letter-spacing:0.22px;left:181.7px;transform-origin:100% 50%;transform:translateX(-100%);">500</span>
<div style="left:186px;top:237px;width:7px;height:1px;background:#eeeeee;"></div>
<span id="t40" style="top:252.2px;font-size:9.2px;color:#303030;letter-spacing:0.22px;left:181.7px;transform-origin:100% 50%;transform:translateX(-100%);">400</span>
<div style="left:186px;top:256px;width:7px;height:1px;background:#eeeeee;"></div>
<span id="t41" style="top:271.3px;font-size:9.2px;color:#303030;letter-spacing:0.22px;left:181.7px;transform-origin:100% 50%;transform:translateX(-100%);">300</span>
<div style="left:186px;top:275px;width:7px;height:1px;background:#eeeeee;"></div>
<span id="t42" style="top:290.4px;font-size:9.2px;color:#303030;letter-spacing:0.22px;left:181.7px;transform-origin:100% 50%;transform:translateX(-100%);">200</span>
<div style="left:186px;top:294px;width:7px;height:1px;background:#eeeeee;"></div>
<span id="t43" style="top:309.5px;font-size:9.2px;color:#303030;letter-spacing:0.22px;left:181.7px;transform-origin:100% 50%;transform:translateX(-100%);">100</span>
<div style="left:186px;top:313px;width:7px;height:1px;background:#eeeeee;"></div>
<span id="t44" style="top:328.6px;font-size:9.2px;color:#303030;left:181.5px;transform-origin:100% 50%;transform:translateX(-100%) scaleX(0.976);">0</span>
<div style="left:181px;top:332px;width:13px;height:1px;background:#222;"></div>
<div style="left:194px;top:334px;width:1px;height:10px;background:#9a9a9a;"></div>
<span id="t45" style="top:347.1px;font-size:9.2px;color:#303030;letter-spacing:0.15px;left:194.6px;transform:translateX(-50%);">00:00:00</span>
<div style="left:276px;top:334px;width:1px;height:10px;background:#e2e2e2;"></div>
<span id="t46" style="top:347.1px;font-size:9.2px;color:#303030;letter-spacing:0.15px;left:276.9px;transform:translateX(-50%);">00:10:00</span>
<div style="left:359px;top:334px;width:1px;height:10px;background:#e2e2e2;"></div>
<span id="t47" style="top:347.1px;font-size:9.2px;color:#303030;letter-spacing:0.15px;left:359.2px;transform:translateX(-50%);">00:20:00</span>
<span id="t48" style="top:347.1px;font-size:9.2px;color:#303030;letter-spacing:0.15px;left:440.0px;transform:translateX(-50%);">00:30:00</span>
<span id="t49" style="top:358.1px;font-size:9.2px;color:#303030;letter-spacing:0.36px;left:316.7px;transform:translateX(-50%);">Elapsed Time</span>
<span style="left:154.3px;top:237.3px;font-size:9.2px;color:#303030;transform:translate(-50%,-50%) rotate(-90deg) scaleX(1.064);">Temp (C)</span>
<svg style="left:190px;top:136px" width="256" height="202" viewBox="0 0 256 202" ><polyline fill="none" stroke="#1c1c1c" stroke-width="1.15" stroke-linejoin="round" points="4,196 5.2,195.6 6.3,192 8,187 12.3,177.3 15.5,170.5 19.7,164 23.5,160 28.3,156 75,124 165.3,61.2 250.8,49.4"/></svg>
<div style="left:145px;top:372px;width:319px;height:12px;background:#e8e7e7;"></div>
<div style="left:145px;top:372px;width:11px;height:12px;background:#d0cdce;"></div>
<div style="left:145px;top:372px;width:10px;height:1px;background:#fafafa;"></div>
<div style="left:145px;top:372px;width:1px;height:11px;background:#fafafa;"></div>
<div style="left:145px;top:383px;width:11px;height:1px;background:#2a2a2a;"></div>
<div style="left:155px;top:372px;width:1px;height:12px;background:#2a2a2a;"></div>
<div style="left:146px;top:382px;width:9px;height:1px;background:#858585;"></div>
<div style="left:154px;top:373px;width:1px;height:10px;background:#858585;"></div>
<svg style="left:148px;top:375px" width="4" height="6" viewBox="0 0 4 6" ><polygon points="3.5,0 3.5,6 0.5,3" fill="#9a9a9a"/></svg>
<div style="left:453px;top:372px;width:11px;height:12px;background:#d0cdce;"></div>
<div style="left:453px;top:372px;width:10px;height:1px;background:#fafafa;"></div>
<div style="left:453px;top:372px;width:1px;height:11px;background:#fafafa;"></div>
<div style="left:453px;top:383px;width:11px;height:1px;background:#2a2a2a;"></div>
<div style="left:463px;top:372px;width:1px;height:12px;background:#2a2a2a;"></div>
<div style="left:454px;top:382px;width:9px;height:1px;background:#858585;"></div>
<div style="left:462px;top:373px;width:1px;height:10px;background:#858585;"></div>
<svg style="left:457px;top:375px" width="4" height="6" viewBox="0 0 4 6" ><polygon points="0.5,0 0.5,6 3.5,3" fill="#111"/></svg>
<div style="left:156px;top:372px;width:127px;height:12px;background:#d0cdce;"></div>
<div style="left:156px;top:372px;width:126px;height:1px;background:#fafafa;"></div>
<div style="left:156px;top:372px;width:1px;height:11px;background:#fafafa;"></div>
<div style="left:156px;top:383px;width:127px;height:1px;background:#2a2a2a;"></div>
<div style="left:282px;top:372px;width:1px;height:12px;background:#2a2a2a;"></div>
<div style="left:157px;top:382px;width:125px;height:1px;background:#858585;"></div>
<div style="left:281px;top:373px;width:1px;height:10px;background:#858585;"></div>
<div style="left:472px;top:103px;width:323px;height:1px;background:#858585;"></div>
<div style="left:472px;top:103px;width:1px;height:282px;background:#858585;"></div>
<div style="left:473px;top:104px;width:321px;height:1px;background:#2c2c2c;"></div>
<div style="left:473px;top:104px;width:1px;height:280px;background:#2c2c2c;"></div>
<div style="left:472px;top:384px;width:323px;height:1px;background:#f4f4f4;"></div>
<div style="left:794px;top:103px;width:1px;height:282px;background:#f4f4f4;"></div>
<div style="left:474px;top:105px;width:320px;height:267px;background:#d0cdce;"></div>
<div style="left:529px;top:111px;width:259px;height:223px;background:#fff;"></div>
<div style="left:528px;top:111px;width:1px;height:223px;background:#222;"></div>
<div style="left:528px;top:333px;width:260px;height:1px;background:#444;"></div>
<div style="left:518px;top:119px;width:10px;height:1px;background:#9c9c9c;"></div>
<span id="t50" style="top:115.6px;font-size:9.2px;color:#303030;left:485.5px;transform-origin:0 50%;transform:scaleX(0.978);">1x10</span>
<span id="t51" style="top:112.4px;font-size:6.5px;color:#303030;letter-spacing:0.20px;left:507.0px;">-04</span>
<div style="left:518px;top:174px;width:10px;height:1px;background:#9c9c9c;"></div>
<span id="t52" style="top:170.6px;font-size:9.2px;color:#303030;left:485.5px;transform-origin:0 50%;transform:scaleX(0.978);">1x10</span>
<span id="t53" style="top:167.4px;font-size:6.5px;color:#303030;letter-spacing:0.20px;left:507.0px;">-05</span>
<div style="left:523px;top:157px;width:5px;height:1px;background:#a8a8a8;"></div>
<div style="left:523px;top:148px;width:5px;height:1px;background:#a8a8a8;"></div>
<div style="left:523px;top:141px;width:5px;height:1px;background:#a8a8a8;"></div>
<div style="left:523px;top:136px;width:5px;height:1px;background:#a8a8a8;"></div>
<div style="left:523px;top:131px;width:5px;height:1px;background:#a8a8a8;"></div>
<div style="left:523px;top:128px;width:5px;height:1px;background:#a8a8a8;"></div>
<div style="left:523px;top:124px;width:5px;height:1px;background:#a8a8a8;"></div>
<div style="left:523px;top:122px;width:5px;height:1px;background:#a8a8a8;"></div>
<div style="left:518px;top:229px;width:10px;height:1px;background:#9c9c9c;"></div>
<span id="t54" style="top:225.6px;font-size:9.2px;color:#303030;left:485.5px;transform-origin:0 50%;transform:scaleX(0.978);">1x10</span>
<span id="t55" style="top:222.4px;font-size:6.5px;color:#303030;letter-spacing:0.20px;left:507.0px;">-06</span>
<div style="left:523px;top:212px;width:5px;height:1px;background:#a8a8a8;"></div>
<div style="left:523px;top:203px;width:5px;height:1px;background:#a8a8a8;"></div>
<div style="left:523px;top:196px;width:5px;height:1px;background:#a8a8a8;"></div>
<div style="left:523px;top:191px;width:5px;height:1px;background:#a8a8a8;"></div>
<div style="left:523px;top:186px;width:5px;height:1px;background:#a8a8a8;"></div>
<div style="left:523px;top:183px;width:5px;height:1px;background:#a8a8a8;"></div>
<div style="left:523px;top:179px;width:5px;height:1px;background:#a8a8a8;"></div>
<div style="left:523px;top:177px;width:5px;height:1px;background:#a8a8a8;"></div>
<div style="left:518px;top:284px;width:10px;height:1px;background:#9c9c9c;"></div>
<span id="t56" style="top:280.6px;font-size:9.2px;color:#303030;left:485.5px;transform-origin:0 50%;transform:scaleX(0.978);">1x10</span>
<span id="t57" style="top:277.4px;font-size:6.5px;color:#303030;letter-spacing:0.20px;left:507.0px;">-07</span>
<div style="left:523px;top:267px;width:5px;height:1px;background:#a8a8a8;"></div>
<div style="left:523px;top:258px;width:5px;height:1px;background:#a8a8a8;"></div>
<div style="left:523px;top:251px;width:5px;height:1px;background:#a8a8a8;"></div>
<div style="left:523px;top:246px;width:5px;height:1px;background:#a8a8a8;"></div>
<div style="left:523px;top:241px;width:5px;height:1px;background:#a8a8a8;"></div>
<div style="left:523px;top:238px;width:5px;height:1px;background:#a8a8a8;"></div>
<div style="left:523px;top:234px;width:5px;height:1px;background:#a8a8a8;"></div>
<div style="left:523px;top:232px;width:5px;height:1px;background:#a8a8a8;"></div>
<div style="left:523px;top:322px;width:5px;height:1px;background:#a8a8a8;"></div>
<div style="left:523px;top:313px;width:5px;height:1px;background:#a8a8a8;"></div>
<div style="left:523px;top:306px;width:5px;height:1px;background:#a8a8a8;"></div>
<div style="left:523px;top:301px;width:5px;height:1px;background:#a8a8a8;"></div>
<div style="left:523px;top:296px;width:5px;height:1px;background:#a8a8a8;"></div>
<div style="left:523px;top:293px;width:5px;height:1px;background:#a8a8a8;"></div>
<div style="left:523px;top:289px;width:5px;height:1px;background:#a8a8a8;"></div>
<div style="left:523px;top:287px;width:5px;height:1px;background:#a8a8a8;"></div>
<div style="left:596.5px;top:273px;width:4px;height:60.5px;background:#333d88;"></div>
<div style="left:607.0px;top:295px;width:4px;height:38.5px;background:#333d88;"></div>
<div style="left:612.0px;top:315px;width:4px;height:18.5px;background:#333d88;"></div>
<div style="left:617.0px;top:273px;width:4px;height:60.5px;background:#333d88;"></div>
<div style="left:669.0px;top:178px;width:4px;height:155.5px;background:#333d88;"></div>
<div style="left:674.0px;top:294.5px;width:4px;height:39.0px;background:#333d88;"></div>
<div style="left:689.5px;top:215px;width:4px;height:118.5px;background:#333d88;"></div>
<div style="left:731.0px;top:268px;width:4px;height:65.5px;background:#333d88;"></div>
<div style="left:736px;top:345px;width:4px;height:3px;background:#3a48b0;"></div>
<div style="left:532px;top:334px;width:1px;height:3px;background:#aaaaaa;"></div>
<div style="left:537px;top:334px;width:1px;height:3px;background:#aaaaaa;"></div>
<div style="left:542px;top:334px;width:1px;height:3px;background:#aaaaaa;"></div>
<div style="left:548px;top:334px;width:1px;height:3px;background:#aaaaaa;"></div>
<div style="left:553px;top:334px;width:1px;height:5px;background:#333;"></div>
<span id="t58" style="top:350.4px;font-size:9.2px;color:#2a2a2a;left:551.8px;transform:translateX(-50%) scaleX(0.976);">5</span>
<div style="left:558px;top:334px;width:1px;height:3px;background:#aaaaaa;"></div>
<div style="left:563px;top:334px;width:1px;height:3px;background:#aaaaaa;"></div>
<div style="left:568px;top:334px;width:1px;height:3px;background:#aaaaaa;"></div>
<div style="left:573px;top:334px;width:1px;height:3px;background:#aaaaaa;"></div>
<div style="left:579px;top:334px;width:1px;height:5px;background:#333;"></div>
<span id="t59" style="top:350.4px;font-size:9.2px;color:#2a2a2a;letter-spacing:0.38px;left:577.8px;transform:translateX(-50%);">10</span>
<div style="left:584px;top:334px;width:1px;height:3px;background:#aaaaaa;"></div>
<div style="left:589px;top:334px;width:1px;height:3px;background:#aaaaaa;"></div>
<div style="left:594px;top:334px;width:1px;height:3px;background:#aaaaaa;"></div>
<div style="left:599px;top:334px;width:1px;height:3px;background:#aaaaaa;"></div>
<div style="left:604px;top:334px;width:1px;height:5px;background:#333;"></div>
<span id="t60" style="top:350.4px;font-size:9.2px;color:#2a2a2a;letter-spacing:0.38px;left:603.7px;transform:translateX(-50%);">15</span>
<div style="left:610px;top:334px;width:1px;height:3px;background:#aaaaaa;"></div>
<div style="left:615px;top:334px;width:1px;height:3px;background:#aaaaaa;"></div>
<div style="left:620px;top:334px;width:1px;height:3px;background:#aaaaaa;"></div>
<div style="left:625px;top:334px;width:1px;height:3px;background:#aaaaaa;"></div>
<div style="left:630px;top:334px;width:1px;height:5px;background:#333;"></div>
<span id="t61" style="top:350.4px;font-size:9.2px;color:#2a2a2a;letter-spacing:0.38px;left:629.5px;transform:translateX(-50%);">20</span>
<div style="left:635px;top:334px;width:1px;height:3px;background:#aaaaaa;"></div>
<div style="left:641px;top:334px;width:1px;height:3px;background:#aaaaaa;"></div>
<div style="left:646px;top:334px;width:1px;height:3px;background:#aaaaaa;"></div>
<div style="left:651px;top:334px;width:1px;height:3px;background:#aaaaaa;"></div>
<div style="left:656px;top:334px;width:1px;height:5px;background:#333;"></div>
<span id="t62" style="top:350.4px;font-size:9.2px;color:#2a2a2a;letter-spacing:0.38px;left:655.3px;transform:translateX(-50%);">25</span>
<div style="left:661px;top:334px;width:1px;height:3px;background:#aaaaaa;"></div>
<div style="left:666px;top:334px;width:1px;height:3px;background:#aaaaaa;"></div>
<div style="left:672px;top:334px;width:1px;height:3px;background:#aaaaaa;"></div>
<div style="left:677px;top:334px;width:1px;height:3px;background:#aaaaaa;"></div>
<div style="left:682px;top:334px;width:1px;height:5px;background:#333;"></div>
<span id="t63" style="top:350.4px;font-size:9.2px;color:#2a2a2a;letter-spacing:0.38px;left:681.1px;transform:translateX(-50%);">30</span>
<div style="left:687px;top:334px;width:1px;height:3px;background:#aaaaaa;"></div>
<div style="left:692px;top:334px;width:1px;height:3px;background:#aaaaaa;"></div>
<div style="left:697px;top:334px;width:1px;height:3px;background:#aaaaaa;"></div>
<div style="left:703px;top:334px;width:1px;height:3px;background:#aaaaaa;"></div>
<div style="left:708px;top:334px;width:1px;height:5px;background:#333;"></div>
<span id="t64" style="top:350.4px;font-size:9.2px;color:#2a2a2a;letter-spacing:0.38px;left:707.0px;transform:translateX(-50%);">35</span>
<div style="left:713px;top:334px;width:1px;height:3px;background:#aaaaaa;"></div>
<div style="left:718px;top:334px;width:1px;height:3px;background:#aaaaaa;"></div>
<div style="left:723px;top:334px;width:1px;height:3px;background:#aaaaaa;"></div>
<div style="left:728px;top:334px;width:1px;height:3px;background:#aaaaaa;"></div>
<div style="left:734px;top:334px;width:1px;height:5px;background:#333;"></div>
<span id="t65" style="top:350.4px;font-size:9.2px;color:#2a2a2a;letter-spacing:0.38px;left:732.8px;transform:translateX(-50%);">40</span>
<div style="left:739px;top:334px;width:1px;height:3px;background:#aaaaaa;"></div>
<div style="left:744px;top:334px;width:1px;height:3px;background:#aaaaaa;"></div>
<div style="left:749px;top:334px;width:1px;height:3px;background:#aaaaaa;"></div>
<div style="left:754px;top:334px;width:1px;height:3px;background:#aaaaaa;"></div>
<div style="left:759px;top:334px;width:1px;height:5px;background:#333;"></div>
<span id="t66" style="top:350.4px;font-size:9.2px;color:#2a2a2a;letter-spacing:0.38px;left:758.6px;transform:translateX(-50%);">45</span>
<div style="left:765px;top:334px;width:1px;height:3px;background:#aaaaaa;"></div>
<div style="left:770px;top:334px;width:1px;height:3px;background:#aaaaaa;"></div>
<div style="left:775px;top:334px;width:1px;height:3px;background:#aaaaaa;"></div>
<div style="left:780px;top:334px;width:1px;height:3px;background:#aaaaaa;"></div>
<div style="left:785px;top:334px;width:1px;height:5px;background:#333;"></div>
<span id="t67" style="top:350.4px;font-size:9.2px;color:#2a2a2a;letter-spacing:0.38px;left:784.4px;transform:translateX(-50%);">50</span>
<span id="t68" style="top:361.6px;font-size:9.2px;color:#303030;letter-spacing:0.21px;left:658.1px;transform:translateX(-50%);">Scan 828</span>
<span style="left:479.8px;top:222.3px;font-size:9.2px;color:#303030;transform:translate(-50%,-50%) rotate(-90deg) scaleX(1.027);">Pressure mbar</span>
<div style="left:474px;top:372px;width:319px;height:12px;background:#e8e7e7;"></div>
<div style="left:474px;top:372px;width:11px;height:12px;background:#d0cdce;"></div>
<div style="left:474px;top:372px;width:10px;height:1px;background:#fafafa;"></div>
<div style="left:474px;top:372px;width:1px;height:11px;background:#fafafa;"></div>
<div style="left:474px;top:383px;width:11px;height:1px;background:#2a2a2a;"></div>
<div style="left:484px;top:372px;width:1px;height:12px;background:#2a2a2a;"></div>
<div style="left:475px;top:382px;width:9px;height:1px;background:#858585;"></div>
<div style="left:483px;top:373px;width:1px;height:10px;background:#858585;"></div>
<svg style="left:477px;top:375px" width="4" height="6" viewBox="0 0 4 6" ><polygon points="3.5,0 3.5,6 0.5,3" fill="#111"/></svg>
<div style="left:782px;top:372px;width:11px;height:12px;background:#d0cdce;"></div>
<div style="left:782px;top:372px;width:10px;height:1px;background:#fafafa;"></div>
<div style="left:782px;top:372px;width:1px;height:11px;background:#fafafa;"></div>
<div style="left:782px;top:383px;width:11px;height:1px;background:#2a2a2a;"></div>
<div style="left:792px;top:372px;width:1px;height:12px;background:#2a2a2a;"></div>
<div style="left:783px;top:382px;width:9px;height:1px;background:#858585;"></div>
<div style="left:791px;top:373px;width:1px;height:10px;background:#858585;"></div>
<svg style="left:786px;top:375px" width="4" height="6" viewBox="0 0 4 6" ><polygon points="0.5,0 0.5,6 3.5,3" fill="#111"/></svg>
<div style="left:775px;top:372px;width:6px;height:12px;background:#d0cdce;"></div>
<div style="left:775px;top:372px;width:5px;height:1px;background:#fafafa;"></div>
<div style="left:775px;top:372px;width:1px;height:11px;background:#fafafa;"></div>
<div style="left:775px;top:383px;width:6px;height:1px;background:#2a2a2a;"></div>
<div style="left:780px;top:372px;width:1px;height:12px;background:#2a2a2a;"></div>
<div style="left:776px;top:382px;width:4px;height:1px;background:#858585;"></div>
<div style="left:779px;top:373px;width:1px;height:10px;background:#858585;"></div>
<div style="left:0px;top:389px;width:800px;height:1px;background:#dcdcdc;"></div>
<div style="left:0px;top:390px;width:800px;height:1px;background:#fafafa;"></div>
<div style="left:0px;top:391px;width:800px;height:1px;background:#e6e6e6;"></div>
<div style="left:0px;top:393px;width:800px;height:1px;background:#7c7c7c;"></div>
<div style="left:0px;top:394px;width:800px;height:1px;background:#8c8c8c;"></div>
<div style="left:0px;top:395px;width:800px;height:1px;background:#f0f0f0;"></div>
<div style="left:0px;top:396px;width:800px;height:1px;background:#e4e4e4;"></div>
<div style="left:3px;top:398px;width:10px;height:9px;background:#ececec;"></div>
<div style="left:3px;top:398px;width:9px;height:1px;background:#fafafa;"></div>
<div style="left:3px;top:398px;width:1px;height:8px;background:#fafafa;"></div>
<div style="left:3px;top:406px;width:10px;height:1px;background:#2a2a2a;"></div>
<div style="left:12px;top:398px;width:1px;height:9px;background:#2a2a2a;"></div>
<div style="left:4px;top:405px;width:8px;height:1px;background:#858585;"></div>
<div style="left:11px;top:399px;width:1px;height:7px;background:#858585;"></div>
<svg style="left:6px;top:400px" width="4" height="5" viewBox="0 0 4 5" ><polygon points="0.5,0 0.5,5 3.5,2.5" fill="#9a9a9a"/></svg>
<div style="left:5px;top:408px;width:1px;height:150px;background:#f8f8f8;"></div>
<div style="left:6px;top:408px;width:1px;height:150px;background:#e2e2e2;"></div>
<div style="left:7px;top:408px;width:1px;height:150px;background:#a4a4a4;"></div>
<div style="left:8px;top:408px;width:1px;height:150px;background:#f8f8f8;"></div>
<div style="left:9px;top:408px;width:1px;height:150px;background:#e2e2e2;"></div>
<div style="left:10px;top:408px;width:1px;height:150px;background:#a4a4a4;"></div>
<div style="left:15px;top:397px;width:782px;height:149px;background:#164978;"></div>
<div style="left:15px;top:397px;width:782px;height:1px;background:#858585;"></div>
<div style="left:15px;top:397px;width:1px;height:149px;background:#858585;"></div>
<div style="left:16px;top:398px;width:780px;height:1px;background:#2c2c2c;"></div>
<div style="left:16px;top:398px;width:1px;height:147px;background:#2c2c2c;"></div>
<div style="left:796px;top:397px;width:1px;height:149px;background:#f4f4f4;"></div>
<div style="left:795px;top:399px;width:1px;height:146px;background:#fff;"></div>
<span id="t69" style="top:402.5px;font-size:10.6px;color:#f2e22a;font-weight:bold;left:18.0px;transform-origin:0 50%;transform:scaleX(1.237);-webkit-text-stroke:0.45px #f2e22a;">Recipe</span>
<div style="left:18px;top:413px;width:44px;height:1px;background:#f2e22a;"></div>
<div style="left:37px;top:416px;width:30px;height:11px;background:#dde2f0;"></div>
<span id="t70" style="top:417.8px;font-size:8.6px;color:#1c2c5c;font-weight:bold;letter-spacing:0.24px;left:38.3px;-webkit-text-stroke:0.25px #1c2c5c;">Status</span>
<span id="t71" style="top:429.7px;font-size:10.6px;color:#f2e22a;font-weight:bold;left:18.0px;transform-origin:0 50%;transform:scaleX(1.105);-webkit-text-stroke:0.45px #f2e22a;">Instruments</span>
<div style="left:18px;top:440px;width:68px;height:1px;background:#f2e22a;"></div>
<div style="left:17px;top:448px;width:4px;height:1px;background:#a8bcd8;"></div>
<svg style="left:23.5px;top:444.5px" width="16" height="9" viewBox="0 0 16 9" ><rect x="0" y="0" width="9.4" height="8.4" fill="#000"/><rect x="1.2" y="1.6" width="7" height="2.2" fill="#fff"/><rect x="1.2" y="5.6" width="7" height="1.8" fill="#fff"/><rect x="10" y="2" width="3" height="4.6" fill="#000"/><rect x="10.8" y="3.2" width="1.2" height="2.2" fill="#fff"/></svg>
<span id="t72" style="top:443.4px;font-size:9.5px;color:#d4dcf6;font-weight:bold;left:41.0px;transform-origin:0 50%;transform:scaleX(0.973);-webkit-text-stroke:0.3px #d4dcf6;">Mini-Lab</span>
<span id="t73" style="top:454.4px;font-size:8.5px;color:#dde4f8;left:40.5px;transform-origin:0 50%;transform:scaleX(0.953);">LM76-00701004</span>
<span id="t74" style="top:464.6px;font-size:8.5px;color:#dde4f8;left:40.5px;transform-origin:0 50%;transform:scaleX(0.859);">Filament No: 1</span>
<span id="t75" style="top:474.8px;font-size:8.5px;color:#dde4f8;left:40.5px;transform-origin:0 50%;transform:scaleX(0.872);">Filament Status: On</span>
<span id="t76" style="top:485.0px;font-size:8.5px;color:#dde4f8;left:40.5px;transform-origin:0 50%;transform:scaleX(0.878);">Status: Scanning BarChart1</span>
<span id="t77" style="top:404.8px;font-size:14.2px;color:#f0e63e;left:150.5px;transform-origin:0 50%;transform:scaleX(0.962);-webkit-text-stroke:0.35px #f0e63e;">Recipe</span>
<span id="t78" style="top:404.8px;font-size:14.2px;color:#f0e63e;letter-spacing:0.96px;left:199.5px;-webkit-text-stroke:0.35px #f0e63e;">Information</span>
<div style="left:147px;top:424px;width:648px;height:121px;background:#fff;border-top-left-radius:9px;"></div>
<span id="t79" style="top:428.0px;font-size:10.2px;color:#1d4a82;font-weight:bold;left:160.0px;transform-origin:0 50%;transform:scaleX(1.114);-webkit-text-stroke:0.4px #1d4a82;">Alarms</span>
<div style="left:151px;top:443px;width:616px;height:13px;background:#cdcdcd;"></div>
<div style="left:151px;top:443px;width:616px;height:1px;background:#9c9c9c;"></div>
<div style="left:151px;top:456px;width:616px;height:1px;background:#9c9c9c;"></div>
<div style="left:151px;top:469px;width:616px;height:1px;background:#9c9c9c;"></div>
<div style="left:151px;top:443px;width:1px;height:27px;background:#9c9c9c;"></div>
<span id="t80" style="top:445.5px;font-size:9px;color:#111;font-weight:bold;letter-spacing:0.21px;left:172.7px;transform:translateX(-50%);-webkit-text-stroke:0.3px #111;">Category</span>
<div style="left:194px;top:443px;width:1px;height:27px;background:#9c9c9c;"></div>
<span id="t81" style="top:445.5px;font-size:9px;color:#111;font-weight:bold;letter-spacing:0.16px;left:204.6px;transform:translateX(-50%);-webkit-text-stroke:0.3px #111;">Ack</span>
<div style="left:214px;top:443px;width:1px;height:27px;background:#9c9c9c;"></div>
<span id="t82" style="top:445.5px;font-size:9px;color:#111;font-weight:bold;letter-spacing:0.40px;left:296.5px;transform:translateX(-50%);-webkit-text-stroke:0.3px #111;">EventText</span>
<div style="left:380px;top:443px;width:1px;height:27px;background:#9c9c9c;"></div>
<span id="t83" style="top:445.5px;font-size:9px;color:#111;font-weight:bold;letter-spacing:0.52px;left:474.8px;transform:translateX(-50%);-webkit-text-stroke:0.3px #111;">UserText</span>
<div style="left:570px;top:443px;width:1px;height:27px;background:#9c9c9c;"></div>
<span id="t84" style="top:445.5px;font-size:9px;color:#111;font-weight:bold;letter-spacing:0.48px;left:619.8px;transform:translateX(-50%);-webkit-text-stroke:0.3px #111;">StartTime</span>
<div style="left:669px;top:443px;width:1px;height:27px;background:#9c9c9c;"></div>
<span id="t85" style="top:445.5px;font-size:9px;color:#111;font-weight:bold;letter-spacing:0.31px;left:718.8px;transform:translateX(-50%);-webkit-text-stroke:0.3px #111;">EndTime</span>
<div style="left:767px;top:443px;width:1px;height:27px;background:#9c9c9c;"></div>
<svg style="left:167px;top:456.5px" width="12" height="12" viewBox="0 0 12 12" ><circle cx="6" cy="6" r="5.4" fill="#2c2c84" stroke="#141450" stroke-width="0.8"/><circle cx="6" cy="3.2" r="1.1" fill="#fff"/><path d="M4.8,5.2 H6.8 V9 M4.6,9.2 H7.8" stroke="#fff" stroke-width="1.3" fill="none"/></svg>
<span id="t86" style="top:457.9px;font-size:9.5px;color:#222;left:295.8px;transform:translateX(-50%) scaleX(0.898);">Wizard Message</span>
<span id="t87" style="top:457.9px;font-size:9.5px;color:#222;left:474.5px;transform:translateX(-50%) scaleX(0.875);">Connected to Mini-Lab (LM76-00701004)</span>
<span id="t88" style="top:457.9px;font-size:9.5px;color:#222;left:618.8px;transform:translateX(-50%) scaleX(0.862);">6/29/01 4:03:21 PM</span>
<span id="t89" style="top:457.9px;font-size:9.5px;color:#222;left:717.3px;transform:translateX(-50%) scaleX(0.891);">No Time Specified</span>
<div style="left:768px;top:443px;width:12px;height:102px;background:#e2e2e2;"></div>
<div style="left:768px;top:443px;width:12px;height:11px;background:#d0cdce;"></div>
<div style="left:768px;top:443px;width:11px;height:1px;background:#fafafa;"></div>
<div style="left:768px;top:443px;width:1px;height:10px;background:#fafafa;"></div>
<div style="left:768px;top:453px;width:12px;height:1px;background:#2a2a2a;"></div>
<div style="left:779px;top:443px;width:1px;height:11px;background:#2a2a2a;"></div>
<div style="left:769px;top:452px;width:10px;height:1px;background:#858585;"></div>
<div style="left:778px;top:444px;width:1px;height:9px;background:#858585;"></div>
<svg style="left:771px;top:446px" width="6" height="4" viewBox="0 0 6 4" ><polygon points="0,3.5 6,3.5 3,0.5" fill="#111"/></svg>
<div style="left:768px;top:534px;width:12px;height:11px;background:#d0cdce;"></div>
<div style="left:768px;top:534px;width:11px;height:1px;background:#fafafa;"></div>
<div style="left:768px;top:534px;width:1px;height:10px;background:#fafafa;"></div>
<div style="left:768px;top:544px;width:12px;height:1px;background:#2a2a2a;"></div>
<div style="left:779px;top:534px;width:1px;height:11px;background:#2a2a2a;"></div>
<div style="left:769px;top:543px;width:10px;height:1px;background:#858585;"></div>
<div style="left:778px;top:535px;width:1px;height:9px;background:#858585;"></div>
<svg style="left:771px;top:538px" width="6" height="4" viewBox="0 0 6 4" ><polygon points="0,0.5 6,0.5 3,3.5" fill="#111"/></svg>
<div style="left:780px;top:405px;width:13px;height:12px;background:#e4e4e4;"></div>
<svg style="left:783px;top:408px" width="7" height="6" viewBox="0 0 7 6" ><path d="M0.8,0.5 L6,5.5 M6,0.5 L0.8,5.5" stroke="#000" stroke-width="1.9"/></svg>
<div style="left:156px;top:531.5px;width:9px;height:9px;background:#fff;border:1px solid #555;border-right-color:#ccc;border-bottom-color:#ccc;"></div>
<svg style="left:157px;top:533px" width="7" height="7" viewBox="0 0 7 7" ><path d="M0.8,3 L2.8,5.2 L6.4,0.8" fill="none" stroke="#111" stroke-width="1.4"/></svg>
<span id="t90" style="top:533.2px;font-size:9.2px;color:#111;font-weight:bold;left:168.0px;transform-origin:0 50%;transform:scaleX(0.986);-webkit-text-stroke:0.3px #111;">Always Show latest Alarm(s)</span>
<div style="left:304px;top:531px;width:9px;height:9px;background:#d0cdce;"></div>
<div style="left:304px;top:531px;width:8px;height:1px;background:#fafafa;"></div>
<div style="left:304px;top:531px;width:1px;height:8px;background:#fafafa;"></div>
<div style="left:304px;top:539px;width:9px;height:1px;background:#2a2a2a;"></div>
<div style="left:312px;top:531px;width:1px;height:9px;background:#2a2a2a;"></div>
<div style="left:305px;top:538px;width:7px;height:1px;background:#858585;"></div>
<div style="left:311px;top:532px;width:1px;height:7px;background:#858585;"></div>
<span id="t91" style="top:532.6px;font-size:9.2px;color:#111;font-weight:bold;letter-spacing:0.39px;left:316.0px;-webkit-text-stroke:0.3px #111;">Acknowledge All</span>
<span id="t92" style="top:532.6px;font-size:9.2px;color:#111;font-weight:bold;letter-spacing:0.22px;left:764.7px;transform-origin:100% 50%;transform:translateX(-100%);-webkit-text-stroke:0.3px #111;">Record 1 of 1</span>
<div style="left:15px;top:545px;width:782px;height:14px;background:#d0cdce;"></div>
<div style="left:200px;top:545px;width:596px;height:1px;background:#222;"></div>
<div style="left:16px;top:546px;width:13px;height:12px;background:#d0cdce;"></div>
<div style="left:16px;top:546px;width:12px;height:1px;background:#fafafa;"></div>
<div style="left:16px;top:546px;width:1px;height:11px;background:#fafafa;"></div>
<div style="left:16px;top:557px;width:13px;height:1px;background:#2a2a2a;"></div>
<div style="left:28px;top:546px;width:1px;height:12px;background:#2a2a2a;"></div>
<div style="left:17px;top:556px;width:11px;height:1px;background:#858585;"></div>
<div style="left:27px;top:547px;width:1px;height:10px;background:#858585;"></div>
<svg style="left:19.5px;top:548.5px" width="6" height="7" viewBox="0 0 6 7" ><rect x="0" y="0" width="1.5" height="7" fill="#a6a6a6"/><polygon points="6,0 6,7 2,3.5" fill="#a6a6a6"/></svg>
<div style="left:29px;top:546px;width:13px;height:12px;background:#d0cdce;"></div>
<div style="left:29px;top:546px;width:12px;height:1px;background:#fafafa;"></div>
<div style="left:29px;top:546px;width:1px;height:11px;background:#fafafa;"></div>
<div style="left:29px;top:557px;width:13px;height:1px;background:#2a2a2a;"></div>
<div style="left:41px;top:546px;width:1px;height:12px;background:#2a2a2a;"></div>
<div style="left:30px;top:556px;width:11px;height:1px;background:#858585;"></div>
<div style="left:40px;top:547px;width:1px;height:10px;background:#858585;"></div>
<svg style="left:32.5px;top:548.5px" width="6" height="7" viewBox="0 0 6 7" ><polygon points="5,0 5,7 1,3.5" fill="#a6a6a6"/></svg>
<div style="left:42px;top:546px;width:13px;height:12px;background:#d0cdce;"></div>
<div style="left:42px;top:546px;width:12px;height:1px;background:#fafafa;"></div>
<div style="left:42px;top:546px;width:1px;height:11px;background:#fafafa;"></div>
<div style="left:42px;top:557px;width:13px;height:1px;background:#2a2a2a;"></div>
<div style="left:54px;top:546px;width:1px;height:12px;background:#2a2a2a;"></div>
<div style="left:43px;top:556px;width:11px;height:1px;background:#858585;"></div>
<div style="left:53px;top:547px;width:1px;height:10px;background:#858585;"></div>
<svg style="left:45.5px;top:548.5px" width="6" height="7" viewBox="0 0 6 7" ><polygon points="1,0 1,7 5,3.5" fill="#a6a6a6"/></svg>
<div style="left:55px;top:546px;width:13px;height:12px;background:#d0cdce;"></div>
<div style="left:55px;top:546px;width:12px;height:1px;background:#fafafa;"></div>
<div style="left:55px;top:546px;width:1px;height:11px;background:#fafafa;"></div>
<div style="left:55px;top:557px;width:13px;height:1px;background:#2a2a2a;"></div>
<div style="left:67px;top:546px;width:1px;height:12px;background:#2a2a2a;"></div>
<div style="left:56px;top:556px;width:11px;height:1px;background:#858585;"></div>
<div style="left:66px;top:547px;width:1px;height:10px;background:#858585;"></div>
<svg style="left:58.5px;top:548.5px" width="6" height="7" viewBox="0 0 6 7" ><polygon points="0,0 0,7 4,3.5" fill="#a6a6a6"/><rect x="4.5" y="0" width="1.5" height="7" fill="#a6a6a6"/></svg>
<svg style="left:68px;top:545px" width="140" height="14" viewBox="0 0 140 14" ><path d="M0,0 L5.5,12.5 H33 L37,0" fill="#d0cdce" stroke="#222" stroke-width="1"/><path d="M33,0 L38.5,12.5 H126 L132,0" fill="#fff" stroke="#222" stroke-width="1"/><path d="M34,0 H131" stroke="#fff" stroke-width="1.6"/></svg>
<span id="t93" style="top:547.4px;font-size:9.5px;color:#222;left:77.0px;transform-origin:0 50%;transform:scaleX(0.947);">Main</span>
<span id="t94" style="top:547.4px;font-size:9.5px;color:#111;font-weight:bold;left:109.0px;transform-origin:0 50%;transform:scaleX(0.997);">Oven Temperature</span>
<div style="left:0px;top:559px;width:800px;height:1px;background:#858585;"></div>
<div style="left:0px;top:560px;width:800px;height:1px;background:#f4f4f4;"></div>
<span id="t95" style="top:566.9px;font-size:9.5px;color:#111;left:2.5px;transform-origin:0 50%;transform:scaleX(0.856);">Ready</span>
<div style="left:647px;top:565px;width:76px;height:1px;background:#858585;"></div>
<div style="left:647px;top:565px;width:1px;height:13px;background:#858585;"></div>
<div style="left:647px;top:577px;width:76px;height:1px;background:#f4f4f4;"></div>
<div style="left:722px;top:565px;width:1px;height:13px;background:#f4f4f4;"></div>
<span id="t96" style="top:566.9px;font-size:9.5px;color:#111;left:649.5px;transform-origin:0 50%;transform:scaleX(0.822);">Pressure in mbar</span>
<div style="left:725px;top:565px;width:21px;height:1px;background:#858585;"></div>
<div style="left:725px;top:565px;width:1px;height:13px;background:#858585;"></div>
<div style="left:725px;top:577px;width:21px;height:1px;background:#f4f4f4;"></div>
<div style="left:745px;top:565px;width:1px;height:13px;background:#f4f4f4;"></div>
<div style="left:748px;top:565px;width:24px;height:1px;background:#858585;"></div>
<div style="left:748px;top:565px;width:1px;height:13px;background:#858585;"></div>
<div style="left:748px;top:577px;width:24px;height:1px;background:#f4f4f4;"></div>
<div style="left:771px;top:565px;width:1px;height:13px;background:#f4f4f4;"></div>
<div style="left:774px;top:565px;width:24px;height:1px;background:#858585;"></div>
<div style="left:774px;top:565px;width:1px;height:13px;background:#858585;"></div>
<div style="left:774px;top:577px;width:24px;height:1px;background:#f4f4f4;"></div>
<div style="left:797px;top:565px;width:1px;height:13px;background:#f4f4f4;"></div>
<div style="left:0px;top:579px;width:800px;height:1px;background:#f4f4f4;"></div>
<div style="left:2px;top:581px;width:42px;height:17px;background:#d0cdce;"></div>
<div style="left:2px;top:581px;width:41px;height:1px;background:#fafafa;"></div>
<div style="left:2px;top:581px;width:1px;height:16px;background:#fafafa;"></div>
<div style="left:2px;top:597px;width:42px;height:1px;background:#2a2a2a;"></div>
<div style="left:43px;top:581px;width:1px;height:17px;background:#2a2a2a;"></div>
<div style="left:3px;top:596px;width:40px;height:1px;background:#858585;"></div>
<div style="left:42px;top:582px;width:1px;height:15px;background:#858585;"></div>
<svg style="left:5px;top:583px" width="13" height="13" viewBox="0 0 13 13" ><path d="M4,1.5 Q7,0 12,2 V11 Q7,9.4 4,11 Z" fill="#222"/><rect x="5" y="3" width="3" height="3.4" fill="#d04030"/><rect x="8.6" y="3.4" width="3" height="3.4" fill="#38a048"/><rect x="5" y="7" width="3" height="3" fill="#3858c0"/><rect x="8.6" y="7.4" width="3" height="3" fill="#e0c830"/><path d="M0.5,3 H3 M1,5.5 H3 M0.5,8 H3 M1.5,10.5 H3" stroke="#555" stroke-width="1"/></svg>
<span id="t97" style="top:585.2px;font-size:9.6px;color:#111;font-weight:bold;left:19.5px;transform-origin:0 50%;transform:scaleX(0.961);">Start</span>
<div style="left:45px;top:582px;width:1px;height:16px;background:#f4f4f4;"></div>
<div style="left:47px;top:581px;width:125px;height:18px;background:#e8e7e7;"></div>
<div style="left:47px;top:581px;width:125px;height:1px;background:#2a2a2a;"></div>
<div style="left:47px;top:581px;width:1px;height:18px;background:#2a2a2a;"></div>
<div style="left:48px;top:582px;width:123px;height:1px;background:#858585;"></div>
<div style="left:48px;top:582px;width:1px;height:16px;background:#858585;"></div>
<div style="left:47px;top:598px;width:125px;height:1px;background:#fafafa;"></div>
<div style="left:171px;top:581px;width:1px;height:18px;background:#fafafa;"></div>
<svg style="left:50px;top:583.6px" width="14" height="14" viewBox="0 0 14 14" ><circle cx="9.6" cy="3.8" r="2.7" fill="#3e3e72" stroke="#1c1c4c" stroke-width="0.7"/><circle cx="2.8" cy="10.6" r="2.3" fill="#fff" stroke="#222" stroke-width="0.8"/><circle cx="9.6" cy="10.6" r="2.3" fill="#a8d0d8" stroke="#222" stroke-width="0.8"/></svg>
<span id="t98" style="top:585.9px;font-size:9.2px;color:#111;font-weight:bold;letter-spacing:0.11px;left:65.0px;">Process Eye - Oven ...</span>
<div style="left:175px;top:581px;width:124px;height:17px;background:#d0cdce;"></div>
<div style="left:175px;top:581px;width:123px;height:1px;background:#fafafa;"></div>
<div style="left:175px;top:581px;width:1px;height:16px;background:#fafafa;"></div>
<div style="left:175px;top:597px;width:124px;height:1px;background:#2a2a2a;"></div>
<div style="left:298px;top:581px;width:1px;height:17px;background:#2a2a2a;"></div>
<div style="left:176px;top:596px;width:122px;height:1px;background:#858585;"></div>
<div style="left:297px;top:582px;width:1px;height:15px;background:#858585;"></div>
<svg style="left:177px;top:583px" width="14" height="13" viewBox="0 0 14 13" ><rect x="0.5" y="0.5" width="12.5" height="12" fill="#a8d4ac" stroke="#6a8a6a" stroke-width="0.6"/><path d="M5,1 V5 M7,0.6 V5 M9,1 V5" stroke="#fff" stroke-width="1.2"/><path d="M1,8.5 L4,5.2 H12.6 V6.6 H11.6 L10.6,10.4 H5 L4.4,7.4 L2,9.6 Z" fill="#111"/><rect x="8" y="9.6" width="5" height="3" fill="#e4dc48"/><rect x="1.2" y="10" width="3" height="2" fill="#e8f4e8"/></svg>
<span id="t99" style="top:585.0px;font-size:9.5px;color:#111;left:192.0px;transform-origin:0 50%;transform:scaleX(0.865);">Recipe Wizard - Process E...</span>
<div style="left:302px;top:581px;width:125px;height:17px;background:#d0cdce;"></div>
<div style="left:302px;top:581px;width:124px;height:1px;background:#fafafa;"></div>
<div style="left:302px;top:581px;width:1px;height:16px;background:#fafafa;"></div>
<div style="left:302px;top:597px;width:125px;height:1px;background:#2a2a2a;"></div>
<div style="left:426px;top:581px;width:1px;height:17px;background:#2a2a2a;"></div>
<div style="left:303px;top:596px;width:123px;height:1px;background:#858585;"></div>
<div style="left:425px;top:582px;width:1px;height:15px;background:#858585;"></div>
<svg style="left:305px;top:583px" width="13" height="13" viewBox="0 0 13 13" ><rect x="1" y="2.5" width="9.5" height="9" fill="#fff" stroke="#222" stroke-width="0.9"/><path d="M2.5,9.5 L5,6 L7,8 L9,4.5" stroke="#c03030" stroke-width="1.3" fill="none"/><path d="M5,10 L12.5,1" stroke="#2838a0" stroke-width="1.6"/><circle cx="3.8" cy="4.8" r="1.3" fill="#30a040"/></svg>
<span id="t100" style="top:585.0px;font-size:9.5px;color:#111;left:319.5px;transform-origin:0 50%;transform:scaleX(0.848);">untitled - Paint</span>
<div style="left:429px;top:581px;width:125px;height:17px;background:#d0cdce;"></div>
<div style="left:429px;top:581px;width:124px;height:1px;background:#fafafa;"></div>
<div style="left:429px;top:581px;width:1px;height:16px;background:#fafafa;"></div>
<div style="left:429px;top:597px;width:125px;height:1px;background:#2a2a2a;"></div>
<div style="left:553px;top:581px;width:1px;height:17px;background:#2a2a2a;"></div>
<div style="left:430px;top:596px;width:123px;height:1px;background:#858585;"></div>
<div style="left:552px;top:582px;width:1px;height:15px;background:#858585;"></div>
<svg style="left:432px;top:584px" width="13" height="12" viewBox="0 0 13 12" ><path d="M0.5,2.5 H4.5 L5.5,3.5 H10.5 V9.5 H0.5 Z" fill="#e8d860" stroke="#55500c" stroke-width="0.9"/><circle cx="7" cy="6.5" r="2.4" fill="#d8e8f4" stroke="#222" stroke-width="1"/><path d="M8.8,8.4 L11.8,11.4" stroke="#222" stroke-width="1.6"/></svg>
<span id="t101" style="top:585.0px;font-size:9.5px;color:#111;left:446.0px;transform-origin:0 50%;transform:scaleX(0.847);">Exploring - 3&#189; Floppy (A:)</span>
<div style="left:736px;top:581px;width:62px;height:1px;background:#858585;"></div>
<div style="left:736px;top:581px;width:1px;height:18px;background:#858585;"></div>
<div style="left:736px;top:598px;width:62px;height:1px;background:#f4f4f4;"></div>
<div style="left:797px;top:581px;width:1px;height:18px;background:#f4f4f4;"></div>
<svg style="left:739px;top:583px" width="13" height="13" viewBox="0 0 13 13" ><path d="M1.5,0.5 V8 H7 M3.5,8 V3 M5.5,8 V5" fill="none" stroke="#2838a0" stroke-width="1.1"/><rect x="5.5" y="6.5" width="6.5" height="4" fill="#e8e8e8" stroke="#222" stroke-width="0.9"/><path d="M6.5,12 H11.5 M7,8.6 H10.6" stroke="#222" stroke-width="1"/></svg>
<span id="t102" style="top:585.2px;font-size:9.5px;color:#111;left:760.0px;transform-origin:0 50%;transform:scaleX(0.791);">4:43 PM</span>
</div></body></html>
